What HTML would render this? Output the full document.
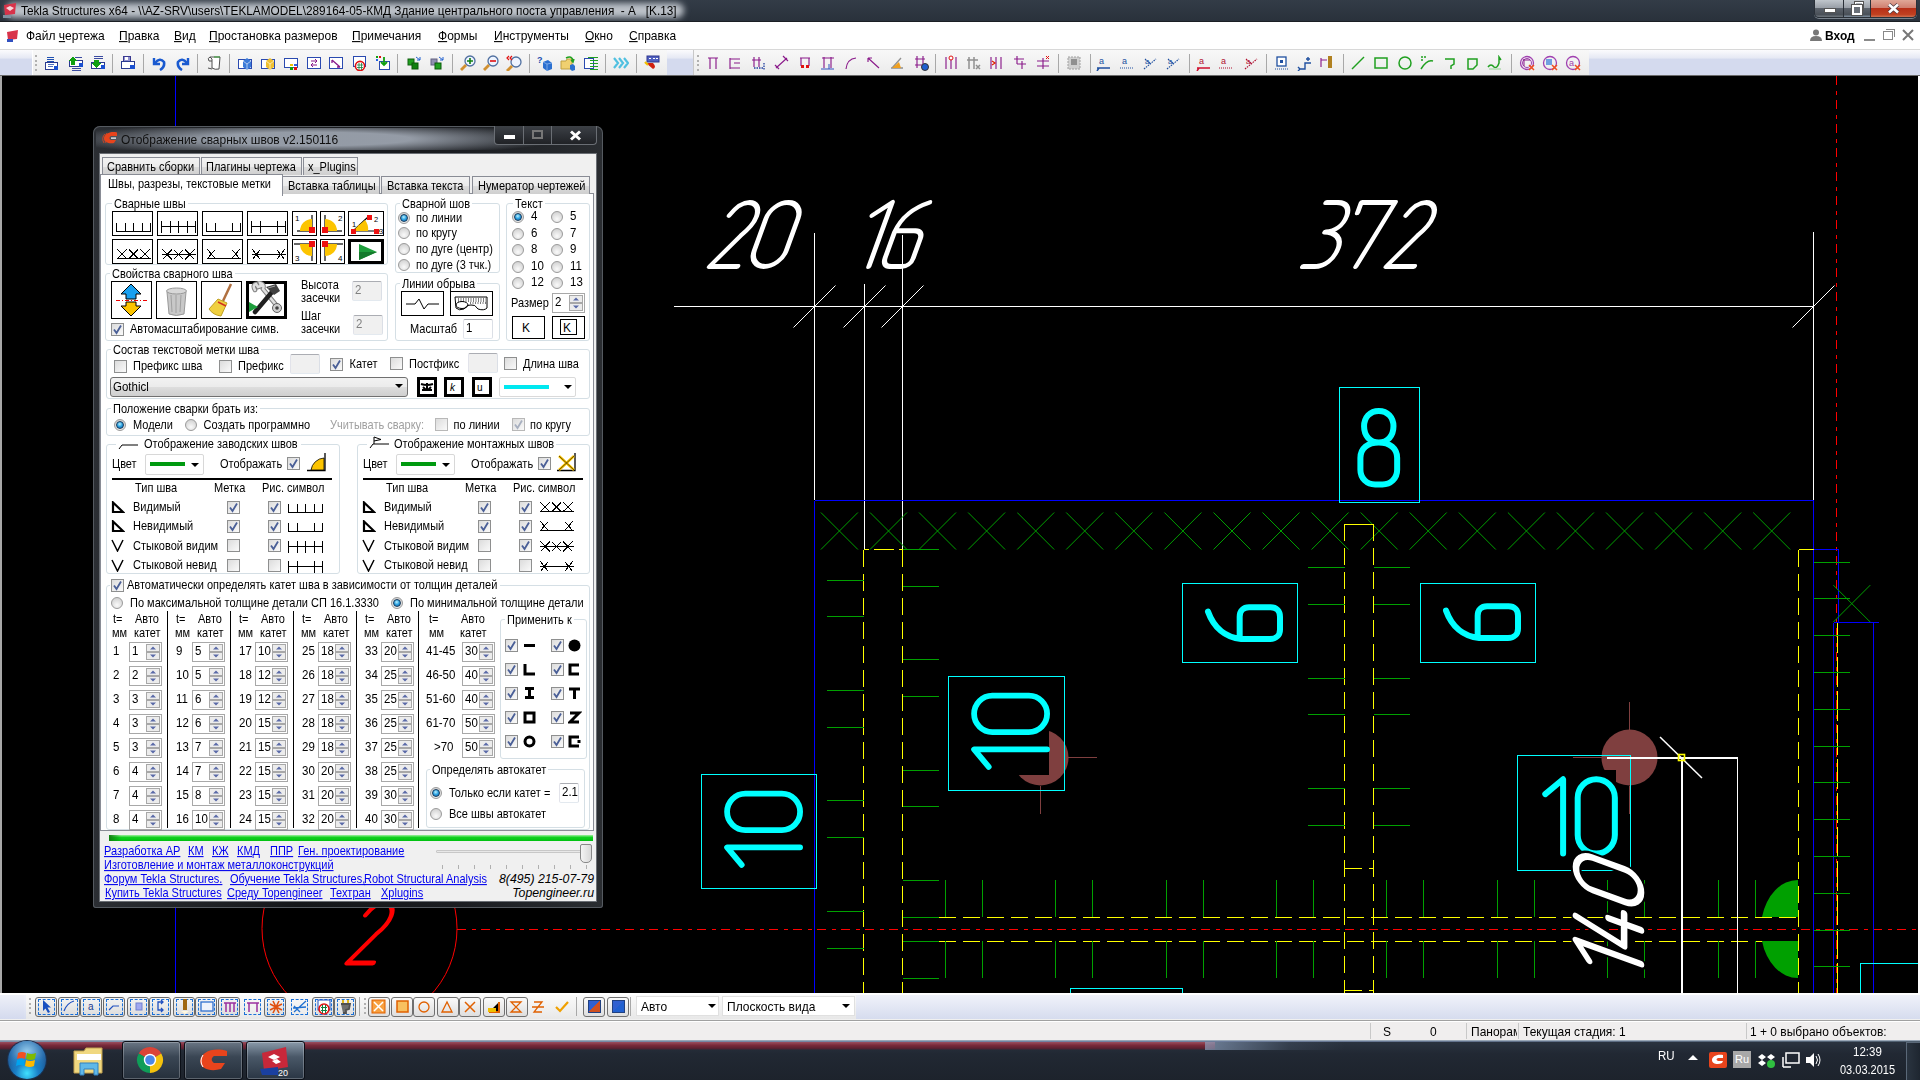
<!DOCTYPE html><html><head><meta charset="utf-8"><style>html,body{margin:0;padding:0}body{width:1920px;height:1080px;overflow:hidden;position:relative;background:#000;font-family:'Liberation Sans', sans-serif}.a{position:absolute;box-sizing:content-box}.t{position:absolute;white-space:nowrap;line-height:1}u{text-decoration:underline}</style></head><body><div class=a style="left:0;top:0;width:1920px;height:21px;background:linear-gradient(#333c47,#29313b)"></div><div class=a style="left:6px;top:3px;width:678px;height:15px;border-radius:8px;background:rgba(200,205,212,.92);filter:blur(3px)"></div><div class=a style="left:0;top:21px;width:1920px;height:1px;background:#1b1f24"></div><svg class=a style="left:2px;top:2px" width="16" height="16"><path d="M2,3 L14,1 L13,12 L3,13 Z" fill="#d8334a"/><path d="M4,6 L8,4 L12,6 L8,9Z" fill="#fff" opacity=".8"/><rect x="1" y="13" width="8" height="3" fill="#8090a0"/></svg><div class=t style="left:21.0px;top:5.5px;font-size:11.8px;color:#000;transform:scaleY(1.08);transform-origin:0 9.99px;">Tekla Structures x64 - \\AZ-SRV\users\TEKLAMODEL\289164-05-КМД Здание центрального поста управления &nbsp;- А &nbsp; [K.13]</div><div class=a style="left:1814px;top:0;width:103px;height:18px;border:1px solid #2a3038;border-top:none;border-radius:0 0 5px 5px;box-sizing:border-box;overflow:hidden;display:flex;box-shadow:0 1px 0 rgba(200,210,220,.5)"><div style="width:28px;height:17px;background:linear-gradient(#c0c6cc,#9aa0a8 45%,#5c636c 50%,#4a5058 85%,#70787f);border-right:1px solid #2a3038;position:relative"><div style="position:absolute;left:9px;top:8px;width:10px;height:3px;background:#fff;border:1px solid #555"></div></div><div style="width:26px;height:17px;background:linear-gradient(#c0c6cc,#9aa0a8 45%,#5c636c 50%,#4a5058 85%,#8090a0);border-right:1px solid #2a3038;position:relative"><div style="position:absolute;left:11px;top:2px;width:6px;height:6px;border:1.5px solid #fff;box-shadow:0 0 0 1px #555"></div><div style="position:absolute;left:8px;top:5px;width:6px;height:6px;border:2px solid #fff;background:#6a7078;box-shadow:0 0 0 1px #555"></div></div><div style="flex:1;height:17px;background:linear-gradient(#e0a898,#d08070 45%,#b83018 50%,#c04020 85%,#d07050);position:relative"><svg style="position:absolute;left:16px;top:3px" width="13" height="11"><path d="M2,1.5 L11,9.5 M11,1.5 L2,9.5" stroke="#4a3a40" stroke-width="4"/><path d="M2,1.5 L11,9.5 M11,1.5 L2,9.5" stroke="#fff" stroke-width="2.6"/></svg></div></div><div class=a style="left:0.0px;top:22.0px;width:1920.0px;height:27.0px;background:#fff"></div><div class=a style="left:0.0px;top:49.0px;width:1920.0px;height:1.0px;background:#d8d8d8"></div><svg class=a style="left:5px;top:29px" width="14" height="14"><path d="M2,3 L13,1 L12,10 L3,11 Z" fill="#d8334a"/><rect x="2" y="10" width="6" height="3" fill="#3050c0"/></svg><div class=t style="left:26.0px;top:29.8px;font-size:12px;color:#000;transform:scaleY(1.08);transform-origin:0 10.16px;">Файл <u>ч</u>ертежа</div><div class=t style="left:119.0px;top:29.8px;font-size:12px;color:#000;transform:scaleY(1.08);transform-origin:0 10.16px;"><u>П</u>равка</div><div class=t style="left:174.0px;top:29.8px;font-size:12px;color:#000;transform:scaleY(1.08);transform-origin:0 10.16px;"><u>В</u>ид</div><div class=t style="left:209.0px;top:29.8px;font-size:12px;color:#000;transform:scaleY(1.08);transform-origin:0 10.16px;"><u>П</u>ростановка размеров</div><div class=t style="left:352.0px;top:29.8px;font-size:12px;color:#000;transform:scaleY(1.08);transform-origin:0 10.16px;"><u>П</u>римечания</div><div class=t style="left:438.0px;top:29.8px;font-size:12px;color:#000;transform:scaleY(1.08);transform-origin:0 10.16px;"><u>Ф</u>ормы</div><div class=t style="left:494.0px;top:29.8px;font-size:12px;color:#000;transform:scaleY(1.08);transform-origin:0 10.16px;"><u>И</u>нструменты</div><div class=t style="left:585.0px;top:29.8px;font-size:12px;color:#000;transform:scaleY(1.08);transform-origin:0 10.16px;"><u>О</u>кно</div><div class=t style="left:629.0px;top:29.8px;font-size:12px;color:#000;transform:scaleY(1.08);transform-origin:0 10.16px;"><u>С</u>правка</div><svg class=a style="left:1809px;top:29px" width="14" height="12"><circle cx="7" cy="3.5" r="3" fill="#777"/><path d="M1,12 Q1,7 7,7 Q13,7 13,12Z" fill="#777"/></svg><div class=t style="left:1825.0px;top:29.8px;font-size:12px;color:#000;transform:scaleY(1.08);transform-origin:0 10.16px;font-weight:bold">Вход</div><div class=a style="left:1864.0px;top:39.0px;width:11.0px;height:2.0px;background:#8a8a8a"></div><div class=a style="left:1883px;top:31px;width:8px;height:7px;border:1px solid #888"></div><div class=a style="left:1886px;top:29px;width:8px;height:7px;border-top:1px solid #888;border-right:1px solid #888"></div><svg class=a style="left:1902px;top:29px" width="12" height="12"><path d="M1,1 L11,11 M11,1 L1,11" stroke="#777" stroke-width="2"/></svg><div class=a style="left:0.0px;top:50.0px;width:1920.0px;height:26.0px;background:linear-gradient(#fbfbfd,#e6e9f4 30%,#d4daee 36%,#d4daee)"></div><div class=a style="left:32.0px;top:50.0px;width:634.0px;height:26.0px;background:linear-gradient(#f8f8f8,#eaeaea);border-left:1px solid #fff"></div><div class=a style="left:693.0px;top:50.0px;width:895.0px;height:26.0px;background:linear-gradient(#f8f8f8,#eaeaea);border-left:1px solid #c8c8c8"></div><div class=a style="left:0.0px;top:75.0px;width:1920.0px;height:1.0px;background:#6a6a6a"></div><div class=a style="left:0.0px;top:993.0px;width:1920.0px;height:28.0px;background:#f0f0f0"></div><div class=a style="left:0.0px;top:993.0px;width:1920.0px;height:2.0px;background:#fff"></div><div class=a style="left:0.0px;top:995.0px;width:24.0px;height:24.0px;background:linear-gradient(#eef0f8,#d4daee)"></div><div class=a style="left:24.0px;top:995.0px;width:1896.0px;height:24.0px;background:linear-gradient(#f0f2fa,#d6dcee)"></div><div class=a style="left:26.0px;top:995.0px;width:830.0px;height:24.0px;background:linear-gradient(#fafafa,#e8e8e8)"></div><div class=a style="left:0.0px;top:1020.0px;width:1920.0px;height:1.0px;background:#a0a0a0"></div><div class=a style="left:0.0px;top:1021.0px;width:1920.0px;height:19.0px;background:#f0eeee;border-top:1px solid #fff"></div><div class=a style="left:1370.0px;top:1023.0px;width:1.0px;height:16.0px;background:#c8c8c8"></div><div class=a style="left:1466.0px;top:1023.0px;width:1.0px;height:16.0px;background:#c8c8c8"></div><div class=a style="left:1518.0px;top:1023.0px;width:1.0px;height:16.0px;background:#c8c8c8"></div><div class=a style="left:1746.0px;top:1023.0px;width:1.0px;height:16.0px;background:#c8c8c8"></div><div class=t style="left:1383.0px;top:1025.8px;font-size:12px;color:#000;transform:scaleY(1.08);transform-origin:0 10.16px;">S</div><div class=t style="left:1430.0px;top:1025.8px;font-size:12px;color:#000;transform:scaleY(1.08);transform-origin:0 10.16px;">0</div><div class=t style="left:1471.0px;top:1025.8px;font-size:12px;color:#000;transform:scaleY(1.08);transform-origin:0 10.16px;width:46px;overflow:hidden">Панорам</div><div class=t style="left:1523.0px;top:1025.8px;font-size:12px;color:#000;transform:scaleY(1.08);transform-origin:0 10.16px;">Текущая стадия: 1</div><div class=t style="left:1750.0px;top:1025.8px;font-size:12px;color:#000;transform:scaleY(1.08);transform-origin:0 10.16px;">1 + 0 выбрано объектов:</div><div class=a style="left:0.0px;top:1040.0px;width:1920.0px;height:40.0px;background:linear-gradient(#2c3542 0%,#212833 35%,#1d232c 100%)"></div><div class=a style="left:0.0px;top:1041.0px;width:1920.0px;height:1.0px;background:linear-gradient(90deg,#8090a8,#7080a0 60%,#506070)"></div><div class=a style="left:0.0px;top:1042.0px;width:1215.0px;height:8.0px;background:linear-gradient(#9a5060,#7a2a3a 40%,#5a2030 80%,rgba(40,40,50,0))"></div><div class=a style="left:1205.0px;top:1042.0px;width:140.0px;height:8.0px;background:linear-gradient(90deg,rgba(140,160,190,.7),rgba(80,95,115,.3) 60%,rgba(0,0,0,0))"></div><div class=a style="left:0.0px;top:1040.0px;width:1920.0px;height:1.0px;background:#9aa8b8"></div><svg class=a style="left:44.0px;top:55px" width="16" height="16"><g shape-rendering="crispEdges"><path d="M2.5,2.5 L9.5,2.5 M2.5,4.5 L9.5,4.5 M2.5,6.5 L9.5,6.5 M2.5,8.5 L9.5,8.5 M2.5,10.5 L7.5,10.5" stroke="#2050b0"/><rect x="1.5" y="7.5" width="12" height="7" fill="#fff" stroke="#2a3a90"/><path d="M3.5,9.5 L9.5,9.5 M3.5,11.5 L8.5,11.5" stroke="#5070c0"/><rect x="10" y="11" width="4" height="4" fill="#1a50d0"/></g></svg><svg class=a style="left:67.5px;top:55px" width="16" height="16"><g shape-rendering="crispEdges"><path d="M3.5,13.5 L12.5,13.5 M3.5,15.5 L12.5,15.5 M6.5,2.5 L13.5,2.5" stroke="#3a4aa0"/><rect x="1.5" y="5.5" width="13" height="6" fill="#fff" stroke="#2a3a90"/><rect x="11" y="8" width="4" height="4" fill="#1a50d0"/><path d="M1,6 L5,1 L9,6 L7,6 L7,10 L3,10 L3,6Z" fill="#10a010"/></g></svg><svg class=a style="left:90.4px;top:55px" width="16" height="16"><g shape-rendering="crispEdges"><path d="M3.5,1.5 L12.5,1.5 M3.5,3.5 L12.5,3.5" stroke="#3a4aa0"/><rect x="1.5" y="7.5" width="13" height="6" fill="#fff" stroke="#2a3a90"/><rect x="11" y="10" width="4" height="4" fill="#1a50d0"/><path d="M2,8 L6.5,13 L11,8 L9,8 L9,5 L4,5 L4,8Z" fill="#10a010"/></g></svg><svg class=a style="left:120.3px;top:55px" width="16" height="16"><g shape-rendering="crispEdges"><rect x="3.5" y="1.5" width="7" height="5" fill="#9090d0" stroke="#3a3a90"/><rect x="5" y="2" width="3" height="3" fill="#fff"/><rect x="1.5" y="6.5" width="13" height="7" fill="#fff" stroke="#2a3a90"/><rect x="10" y="10" width="5" height="4" fill="#1a50d0"/></g></svg><svg class=a style="left:151.3px;top:55px" width="16" height="16"><path d="M3,3 L3,9 L9,9" fill="none" stroke="#1a5ad0" stroke-width="2.4"/><path d="M4,8 Q9,2 13,7 Q14,12 9,15" fill="none" stroke="#1a5ad0" stroke-width="2.6"/></svg><svg class=a style="left:175.4px;top:55px" width="16" height="16"><path d="M13,3 L13,9 L7,9" fill="none" stroke="#1a5ad0" stroke-width="2.4"/><path d="M12,8 Q7,2 3,7 Q2,12 7,15" fill="none" stroke="#1a5ad0" stroke-width="2.6"/></svg><svg class=a style="left:206.0px;top:55px" width="16" height="16"><path d="M4,2 L14,2 L13,14 Q9,15 6,13 L6,4Z" fill="#fff" stroke="#505050"/><path d="M4,2 Q1,3 3,6 L6,6 M2,13 L6,14" stroke="#505050" fill="none"/><path d="M8,2 L14,2" stroke="#30a030"/></svg><svg class=a style="left:237.0px;top:55px" width="16" height="16"><g shape-rendering="crispEdges"><rect x="1.5" y="4.5" width="13" height="9" fill="#fff" stroke="#2a4ab0"/></g><path d="M6,6 L10,3 L14,6 L14,12 L10,15 L6,12Z" fill="#3a7ad8"/><path d="M6,6 L10,9 L14,6 M10,9 L10,15" stroke="#fff" stroke-width=".6" fill="none"/></svg><svg class=a style="left:260.0px;top:55px" width="16" height="16"><g shape-rendering="crispEdges"><rect x="1.5" y="4.5" width="13" height="9" fill="#fff" stroke="#2a4ab0"/></g><path d="M6,6 L10,3 L14,6 L14,12 L10,15 L6,12Z" fill="#f0c030"/><path d="M6,6 L10,9 L14,6 M10,9 L10,15" stroke="#fff" stroke-width=".6" fill="none"/></svg><svg class=a style="left:282.6px;top:55px" width="16" height="16"><g shape-rendering="crispEdges"><rect x="1.5" y="3.5" width="13" height="9" fill="#fff" stroke="#2a4ab0"/><rect x="7" y="9" width="3" height="2" fill="#f0c000"/><rect x="11" y="9" width="3" height="2" fill="#3060e0"/><rect x="7" y="12" width="3" height="3" fill="#10a010"/><rect x="11" y="12" width="3" height="3" fill="#e01010"/></g></svg><svg class=a style="left:305.5px;top:55px" width="16" height="16"><g shape-rendering="crispEdges"><rect x="1.5" y="2.5" width="13" height="11" fill="#fff" stroke="#2a4ab0"/></g><path d="M5,6 L11,6 M9,4 L11,6 L9,8 M11,10 L5,10 M7,8 L5,10 L7,12" stroke="#8a1a8a" fill="none"/></svg><svg class=a style="left:328.1px;top:55px" width="16" height="16"><g shape-rendering="crispEdges"><rect x="1.5" y="2.5" width="13" height="11" fill="#fff" stroke="#2a4ab0"/></g><path d="M4,5 L12,12 M4,5 L4,8 M12,12 L9,12" stroke="#8a1a8a" fill="none" stroke-width="1.3"/></svg><svg class=a style="left:351.8px;top:55px" width="16" height="16"><g shape-rendering="crispEdges"><rect x="1.5" y="1.5" width="12" height="10" fill="#fff" stroke="#2a4ab0"/></g><circle cx="8" cy="11" r="4.6" fill="#fff" stroke="#e01010" stroke-width="1.6"/><path d="M5,10 L11,10 M5,12.5 L11,12.5 M7,8 L7,15 M9.5,8 L9.5,15" stroke="#108040" stroke-width=".8"/></svg><svg class=a style="left:374.8px;top:55px" width="16" height="16"><g shape-rendering="crispEdges"><rect x="4.5" y="6.5" width="10" height="8" fill="#fff" stroke="#2a4ab0"/><rect x="1" y="1" width="2" height="2" fill="#10a010"/><rect x="4" y="1" width="2" height="2" fill="#e01010"/><rect x="1" y="4" width="2" height="2" fill="#2060e0"/></g><path d="M9,2 L9,10 M6,7 L9,10 L12,7" stroke="#10a010" stroke-width="1.8" fill="none"/></svg><svg class=a style="left:405.8px;top:55px" width="16" height="16"><rect x="2" y="4" width="6" height="6" fill="#20a020" stroke="#106010"/><rect x="6" y="8" width="6" height="6" fill="#108010" stroke="#0a5a0a"/><path d="M10,2 L14,5 M14,2 L14,5 L11,5" stroke="#2060d0" fill="none"/></svg><svg class=a style="left:428.8px;top:55px" width="16" height="16"><rect x="2" y="4" width="6" height="6" fill="#9090b0" stroke="#606080"/><rect x="6" y="8" width="6" height="6" fill="#20a020" stroke="#0a5a0a"/><path d="M10,2 L14,5 M14,2 L14,5 L11,5" stroke="#2060d0" fill="none"/></svg><svg class=a style="left:459.7px;top:55px" width="16" height="16"><circle cx="10" cy="6" r="5" fill="#eef4ff" stroke="#5070a0" stroke-width="1.3"/><path d="M7,6 L13,6 M10,3 L10,9" stroke="#108010" stroke-width="1.6"/><path d="M6,10 L1,15" stroke="#d09030" stroke-width="2.8"/></svg><svg class=a style="left:483.0px;top:55px" width="16" height="16"><circle cx="10" cy="6" r="5" fill="#eef4ff" stroke="#5070a0" stroke-width="1.3"/><path d="M7,6 L13,6" stroke="#e01010" stroke-width="1.6"/><path d="M6,10 L1,15" stroke="#d09030" stroke-width="2.8"/></svg><svg class=a style="left:506.0px;top:55px" width="16" height="16"><circle cx="10" cy="7" r="5" fill="#eef4ff" stroke="#5070a0" stroke-width="1.3"/><path d="M3,1 L1,3 L3,5 M6,1 L4,3 L6,5" stroke="#e01010" fill="none" stroke-width="1.2"/><path d="M6,11 L1,16" stroke="#d09030" stroke-width="2.8"/></svg><svg class=a style="left:537.0px;top:55px" width="16" height="16"><text x="0" y="8" font-size="9" font-weight="bold" fill="#2050b0" font-family="Liberation Sans">?</text><path d="M6,7 L11,5 L15,8 L15,14 L10,16 L6,13Z" fill="#2a70d0"/><path d="M6,7 L10,9 L15,8 M10,9 L10,16" stroke="#9ac0f0" stroke-width=".7" fill="none"/></svg><svg class=a style="left:560.0px;top:55px" width="16" height="16"><path d="M1,6 L6,6 L7,4 L12,4 L12,14 L1,14Z" fill="#f0d070" stroke="#c0a040"/><path d="M6,3 Q12,0 13,6 M11,5 L13,7 L14,4" stroke="#20a020" fill="none" stroke-width="1.5"/><path d="M10,10 L13,9 L15,11 L15,15 L12,16 L10,14Z" fill="#2a70d0"/></svg><svg class=a style="left:583.3px;top:55px" width="16" height="16"><g shape-rendering="crispEdges"><rect x="1.5" y="3.5" width="9" height="10" fill="#fff" stroke="#2a4ab0" stroke-width="1.4"/><path d="M5,2.5 L15,2.5 M7,5.5 L15,5.5 M7,8.5 L15,8.5 M7,11.5 L15,11.5 M7,14.5 L15,14.5" stroke="#20a020"/></g></svg><svg class=a style="left:612.9px;top:55px" width="16" height="16"><path d="M1,3 L5,8 L1,13 M6,3 L10,8 L6,13 M11,3 L15,8 L11,13" stroke="#50c0e0" stroke-width="2.2" fill="none"/></svg><svg class=a style="left:643.5px;top:55px" width="16" height="16"><rect x="3" y="1" width="12" height="6" fill="#5060c0" stroke="#303890"/><path d="M5,3.5 L7,3.5 M9,3.5 L11,3.5 M12,3.5 L14,3.5" stroke="#fff"/><path d="M2,8 L9,14 Q13,12 9,8Z" fill="#d02010"/><path d="M1,7 L4,10" stroke="#f0c000" stroke-width="2.2"/></svg><div class=a style="left:112.0px;top:54.0px;width:1.0px;height:19.0px;background:#a8a8a8"></div><div class=a style="left:143.0px;top:54.0px;width:1.0px;height:19.0px;background:#a8a8a8"></div><div class=a style="left:197.0px;top:54.0px;width:1.0px;height:19.0px;background:#a8a8a8"></div><div class=a style="left:228.5px;top:54.0px;width:1.0px;height:19.0px;background:#a8a8a8"></div><div class=a style="left:397.0px;top:54.0px;width:1.0px;height:19.0px;background:#a8a8a8"></div><div class=a style="left:452.0px;top:54.0px;width:1.0px;height:19.0px;background:#a8a8a8"></div><div class=a style="left:528.5px;top:54.0px;width:1.0px;height:19.0px;background:#a8a8a8"></div><div class=a style="left:605.0px;top:54.0px;width:1.0px;height:19.0px;background:#a8a8a8"></div><div class=a style="left:636.0px;top:54.0px;width:1.0px;height:19.0px;background:#a8a8a8"></div><div class=a style="left:35.0px;top:55.0px;width:2.0px;height:2.0px;background:#b0b0b0"></div><div class=a style="left:35.0px;top:59.5px;width:2.0px;height:2.0px;background:#b0b0b0"></div><div class=a style="left:35.0px;top:64.0px;width:2.0px;height:2.0px;background:#b0b0b0"></div><div class=a style="left:35.0px;top:68.5px;width:2.0px;height:2.0px;background:#b0b0b0"></div><div class=a style="left:697.0px;top:55.0px;width:2.0px;height:2.0px;background:#b0b0b0"></div><div class=a style="left:697.0px;top:59.5px;width:2.0px;height:2.0px;background:#b0b0b0"></div><div class=a style="left:697.0px;top:64.0px;width:2.0px;height:2.0px;background:#b0b0b0"></div><div class=a style="left:697.0px;top:68.5px;width:2.0px;height:2.0px;background:#b0b0b0"></div><svg class=a style="left:704.8px;top:55px" width="16" height="16"><path d="M3,3 L13,3 M5,3 L5,14 M11,3 L11,14" stroke="#8a1a8a" stroke-width="1.15" fill="none"/></svg><svg class=a style="left:727.4px;top:55px" width="16" height="16"><path d="M3,3 L3,14 M3,4 L13,4 M3,13 L13,13 M7,8 L13,8" stroke="#8a1a8a" stroke-width="1.15" fill="none"/></svg><svg class=a style="left:751.1px;top:55px" width="16" height="16"><path d="M3,2 L3,12 M8,2 L8,12 M1,5 L10,5" stroke="#8a1a8a" stroke-width="1.15" fill="none"/><path d="M3,13 L13,13 M13,8 L13,15" stroke="#2040a0" stroke-dasharray="1.5,1" fill="none" stroke-width="1.3"/></svg><svg class=a style="left:774.0px;top:55px" width="16" height="16"><path d="M2,13 L13,3 M9,1 L14,6 M1,10 L5,14" stroke="#8a1a8a" stroke-width="1.15" fill="none"/></svg><svg class=a style="left:797.0px;top:55px" width="16" height="16"><path d="M3,3 L13,3 M4,3 L4,11 M12,3 L12,11" stroke="#8a1a8a" stroke-width="1.15" fill="none"/><rect x="4" y="10" width="3" height="3" fill="#e01010"/><rect x="9" y="10" width="3" height="3" fill="#e01010"/></svg><svg class=a style="left:820.3px;top:55px" width="16" height="16"><path d="M2,3 L14,3 M4,2 L4,13 M11,2 L11,13" stroke="#8a1a8a" stroke-width="1.15" fill="none"/><path d="M1,14 L14,14 M9,9 L9,14" stroke="#3050c0" fill="none"/></svg><svg class=a style="left:843.3px;top:55px" width="16" height="16"><path d="M3,14 Q4,4 13,3" stroke="#8a1a8a" stroke-width="1.15" fill="none"/></svg><svg class=a style="left:866.3px;top:55px" width="16" height="16"><path d="M2,3 L13,13 M2,3 L2,7 M2,3 L6,3" stroke="#8a1a8a" stroke-width="1.15" fill="none"/></svg><svg class=a style="left:888.9px;top:55px" width="16" height="16"><path d="M2,13 L14,13 M3,13 L12,3" stroke="#909090" stroke-width="1.3" fill="none"/><path d="M3,13 L10,7 L12,13Z" fill="#f0a020"/></svg><svg class=a style="left:912.6px;top:55px" width="16" height="16"><path d="M2,4 L12,4 M2,10 L9,10 M4,1 L4,13 M10,1 L10,9" stroke="#8a1a8a" stroke-width="1.15" fill="none"/><circle cx="12" cy="12" r="3.5" fill="#2060d0" stroke="#333"/></svg><svg class=a style="left:942.8px;top:55px" width="16" height="16"><path d="M3,2 L3,14 M8,2 L8,14 M13,2 L13,14" stroke="#8a1a8a" stroke-width="1.15"/><circle cx="8" cy="3" r="2" fill="#fff" stroke="#e01010"/></svg><svg class=a style="left:966.2px;top:55px" width="16" height="16"><path d="M3,2 L3,14 M8,2 L8,14 M1,5 L12,5" stroke="#909090" stroke-width="1.5"/><path d="M10,10 L14,14 M14,10 L10,14" stroke="#909090" stroke-width="1.5"/></svg><svg class=a style="left:989.1px;top:55px" width="16" height="16"><path d="M2,2 L2,14 M7,2 L7,14 M12,2 L12,14" stroke="#8a1a8a" stroke-width="1.15"/><path d="M3,6 L6,8 L3,10" stroke="#e02000" fill="none" stroke-width="1.3"/></svg><svg class=a style="left:1012.0px;top:55px" width="16" height="16"><path d="M2,4 L12,4 M5,1 L5,9 M5,9 L14,9 M10,6 L10,14" stroke="#8a1a8a" stroke-width="1.15" fill="none"/></svg><svg class=a style="left:1035.4px;top:55px" width="16" height="16"><path d="M2,6 L14,6 M2,11 L14,11 M8,3 L8,14" stroke="#8a1a8a" stroke-width="1.15" fill="none"/><path d="M11,1 L14,4 M14,1 L11,4" stroke="#e01010"/></svg><svg class=a style="left:1065.7px;top:55px" width="16" height="16"><rect x="2" y="2" width="12" height="12" fill="#d0d0d0" stroke="#a0a0a0" stroke-dasharray="2,1"/><rect x="5" y="4" width="6" height="6" fill="#909090"/></svg><svg class=a style="left:1096.0px;top:55px" width="16" height="16"><text x="3" y="9" font-size="9" fill="#2050a0" font-family="Liberation Sans">a</text><path d="M1,13 L14,13 M3,13 L1,16" stroke="#2050a0" stroke-width="1.5"/></svg><svg class=a style="left:1119.3px;top:55px" width="16" height="16"><text x="3" y="9" font-size="9" fill="#2050a0" font-family="Liberation Sans">a</text><path d="M1,13 L14,13" stroke="#2050a0" stroke-dasharray="1,1"/></svg><svg class=a style="left:1142.2px;top:55px" width="16" height="16"><path d="M3,4 L9,9 M2,14 L14,4" stroke="#2050a0" stroke-width="1.2" stroke-dasharray="1.5,1"/><text x="3" y="9" font-size="8" fill="#2050a0" font-family="Liberation Sans">a</text></svg><svg class=a style="left:1165.2px;top:55px" width="16" height="16"><path d="M3,4 L9,9 M2,14 L14,4" stroke="#2050a0" stroke-width="1.2" stroke-dasharray="1.5,1"/><text x="3" y="9" font-size="8" fill="#2050a0" font-family="Liberation Sans">a</text></svg><svg class=a style="left:1196.2px;top:55px" width="16" height="16"><text x="3" y="9" font-size="9" fill="#b01030" font-family="Liberation Sans">a</text><path d="M1,13 L14,13 M3,13 L1,16" stroke="#d01030" stroke-width="1.5"/></svg><svg class=a style="left:1218.1px;top:55px" width="16" height="16"><text x="3" y="9" font-size="9" fill="#b01030" font-family="Liberation Sans">a</text><path d="M1,13 L14,13" stroke="#b01030" stroke-dasharray="1,1"/></svg><svg class=a style="left:1242.5px;top:55px" width="16" height="16"><path d="M3,4 L9,9 M2,14 L14,4" stroke="#b01030" stroke-width="1.2" stroke-dasharray="1.5,1"/><text x="3" y="9" font-size="8" fill="#b01030" font-family="Liberation Sans">a</text></svg><svg class=a style="left:1273.5px;top:55px" width="16" height="16"><rect x="3" y="2" width="9" height="9" fill="#fff" stroke="#2050a0" stroke-width="1.3"/><rect x="6" y="5" width="3" height="3" fill="#2050a0"/><path d="M1,14 L14,14" stroke="#2050a0" stroke-dasharray="1,1"/></svg><svg class=a style="left:1296.5px;top:55px" width="16" height="16"><path d="M2,14 L8,14 L8,8 L14,8 M11,2 L11,6 M9,4 L13,4 M1,12 L3,14 L1,16" stroke="#2050a0" stroke-width="1.4" fill="none"/></svg><svg class=a style="left:1319.0px;top:55px" width="16" height="16"><path d="M2,3 L2,12 M2,5 L8,5" stroke="#8a1a8a" stroke-width="1.15" fill="none"/><rect x="9" y="1" width="4" height="12" fill="#b08020"/><path d="M7,13 L15,13 L11,16Z" fill="#f0f0f0"/></svg><svg class=a style="left:1350.0px;top:55px" width="16" height="16"><path d="M2,14 L14,2" stroke="#20a020" stroke-width="1.5"/></svg><svg class=a style="left:1373.0px;top:55px" width="16" height="16"><rect x="2" y="3" width="12" height="10" fill="none" stroke="#20a020" stroke-width="1.5"/></svg><svg class=a style="left:1396.5px;top:55px" width="16" height="16"><circle cx="8" cy="8" r="6" fill="none" stroke="#20a020" stroke-width="1.5"/></svg><svg class=a style="left:1419.1px;top:55px" width="16" height="16"><path d="M2,14 Q8,4 14,6" stroke="#20a020" stroke-width="1.5" fill="none"/><path d="M2,2 L4,2 M2,5 L4,5 M5,2 L7,2" stroke="#20a020" stroke-width="1.5"/></svg><svg class=a style="left:1442.1px;top:55px" width="16" height="16"><path d="M3,4 L12,4 L12,9 L9,11 L9,14" stroke="#20a020" stroke-width="1.5" fill="none"/></svg><svg class=a style="left:1465.1px;top:55px" width="16" height="16"><path d="M3,4 L12,4 L12,10 L8,14 L3,14Z" stroke="#20a020" stroke-width="1.5" fill="none"/></svg><svg class=a style="left:1486.8px;top:55px" width="16" height="16"><path d="M1,12 Q4,8 7,12 Q10,14 12,8 L12,2 L14,5" stroke="#20a020" stroke-width="1.5" fill="none"/><path d="M2,14 L14,14" stroke="#c0e0c0" stroke-width="2"/></svg><svg class=a style="left:1519.3px;top:55px" width="16" height="16"><circle cx="8" cy="8" r="6.5" fill="none" stroke="#a040b0" stroke-width="1.3"/><circle cx="8" cy="8" r="4.5" fill="none" stroke="#a040b0"/><path d="M4,5 L11,5 M5,4 L5,11" stroke="#8a1a8a"/><path d="M10,10 L15,15 M15,10 L10,15" stroke="#f05020" stroke-width="1.5"/></svg><svg class=a style="left:1542.3px;top:55px" width="16" height="16"><circle cx="8" cy="8" r="6.5" fill="none" stroke="#a040b0" stroke-width="1.3"/><rect x="4" y="4" width="6" height="6" fill="#70a0e0"/><path d="M10,10 L15,15 M15,10 L10,15" stroke="#f05020" stroke-width="1.5"/></svg><svg class=a style="left:1565.3px;top:55px" width="16" height="16"><circle cx="8" cy="8" r="6.5" fill="none" stroke="#a040b0" stroke-width="1.3"/><text x="4" y="11" font-size="9" fill="#a040b0" font-family="Liberation Sans">a</text><path d="M10,10 L15,15 M15,10 L10,15" stroke="#f05020" stroke-width="1.5"/></svg><div class=a style="left:935.0px;top:54.0px;width:1.0px;height:19.0px;background:#a8a8a8"></div><div class=a style="left:1058.0px;top:54.0px;width:1.0px;height:19.0px;background:#a8a8a8"></div><div class=a style="left:1089.5px;top:54.0px;width:1.0px;height:19.0px;background:#a8a8a8"></div><div class=a style="left:1188.5px;top:54.0px;width:1.0px;height:19.0px;background:#a8a8a8"></div><div class=a style="left:1266.0px;top:54.0px;width:1.0px;height:19.0px;background:#a8a8a8"></div><div class=a style="left:1342.5px;top:54.0px;width:1.0px;height:19.0px;background:#a8a8a8"></div><div class=a style="left:1511.0px;top:54.0px;width:1.0px;height:19.0px;background:#a8a8a8"></div><div class=a style="left:29.0px;top:998.0px;width:2.0px;height:2.0px;background:#b0b0b0"></div><div class=a style="left:29.0px;top:1002.5px;width:2.0px;height:2.0px;background:#b0b0b0"></div><div class=a style="left:29.0px;top:1007.0px;width:2.0px;height:2.0px;background:#b0b0b0"></div><div class=a style="left:29.0px;top:1011.5px;width:2.0px;height:2.0px;background:#b0b0b0"></div><div class=a style="left:35.0px;top:997px;width:20px;height:18px;border:1px solid #6a6a6a;border-radius:3px;background:linear-gradient(#f4f4f4,#dcdcdc)"></div><div class=a style="left:38.0px;top:999px;width:15px;height:14px;border:1px dashed #1a70d8"></div><svg class=a style="left:38.0px;top:998px" width="18" height="17"><path d="M5,2 L5,13 L7.5,10.5 L10,15 L12,14 L9.5,9.5 L13,9.5Z" fill="#1a50c0"/></svg><div class=a style="left:57.5px;top:997px;width:20px;height:18px;border:1px solid #6a6a6a;border-radius:3px;background:linear-gradient(#f4f4f4,#dcdcdc)"></div><div class=a style="left:60.5px;top:999px;width:15px;height:14px;border:1px dashed #1a70d8"></div><svg class=a style="left:60.5px;top:998px" width="18" height="17"><path d="M3,13 Q6,5 13,3" stroke="#2050c0" stroke-width="1.3" fill="none"/></svg><div class=a style="left:80.0px;top:997px;width:20px;height:18px;border:1px solid #6a6a6a;border-radius:3px;background:linear-gradient(#f4f4f4,#dcdcdc)"></div><div class=a style="left:83.0px;top:999px;width:15px;height:14px;border:1px dashed #1a70d8"></div><svg class=a style="left:83.0px;top:998px" width="18" height="17"><text x="5" y="12" font-size="10" fill="#1a3a90" font-family="Liberation Sans">a</text></svg><div class=a style="left:103.0px;top:997px;width:20px;height:18px;border:1px solid #6a6a6a;border-radius:3px;background:linear-gradient(#f4f4f4,#dcdcdc)"></div><div class=a style="left:106.0px;top:999px;width:15px;height:14px;border:1px dashed #1a70d8"></div><svg class=a style="left:106.0px;top:998px" width="18" height="17"><path d="M3,12 L7,8 L13,8" stroke="#2050c0" stroke-width="1.2" fill="none"/></svg><div class=a style="left:126.5px;top:997px;width:20px;height:18px;border:1px solid #6a6a6a;border-radius:3px;background:linear-gradient(#f4f4f4,#dcdcdc)"></div><div class=a style="left:129.5px;top:999px;width:15px;height:14px;border:1px dashed #1a70d8"></div><svg class=a style="left:129.5px;top:998px" width="18" height="17"><rect x="6" y="5" width="6" height="7" fill="#a0a8f0" stroke="#7080d0"/></svg><div class=a style="left:149.0px;top:997px;width:20px;height:18px;border:1px solid #6a6a6a;border-radius:3px;background:linear-gradient(#f4f4f4,#dcdcdc)"></div><div class=a style="left:152.0px;top:999px;width:15px;height:14px;border:1px dashed #1a70d8"></div><svg class=a style="left:152.0px;top:998px" width="18" height="17"><path d="M11,4 L6,4 L6,12 L11,12 M9,2 L11,4 L9,6 M9,10 L11,12 L9,14" stroke="#2050c0" stroke-width="1.3" fill="none"/></svg><div class=a style="left:172.5px;top:997px;width:20px;height:18px;border:1px solid #6a6a6a;border-radius:3px;background:linear-gradient(#f4f4f4,#dcdcdc)"></div><div class=a style="left:175.5px;top:999px;width:15px;height:14px;border:1px dashed #1a70d8"></div><svg class=a style="left:175.5px;top:998px" width="18" height="17"><rect x="7" y="1" width="4" height="11" fill="#a06810"/><path d="M5,13 L13,13 L9,16Z" fill="#fff8e0"/></svg><div class=a style="left:195.0px;top:997px;width:20px;height:18px;border:1px solid #6a6a6a;border-radius:3px;background:linear-gradient(#f4f4f4,#dcdcdc)"></div><div class=a style="left:198.0px;top:999px;width:15px;height:14px;border:1px dashed #1a70d8"></div><svg class=a style="left:198.0px;top:998px" width="18" height="17"><rect x="3" y="4" width="12" height="9" fill="#eef2fb" stroke="#3070d0" stroke-width="1.3"/></svg><div class=a style="left:218.0px;top:997px;width:20px;height:18px;border:1px solid #6a6a6a;border-radius:3px;background:linear-gradient(#f4f4f4,#dcdcdc)"></div><div class=a style="left:221.0px;top:999px;width:15px;height:14px;border:1px dashed #1a70d8"></div><svg class=a style="left:221.0px;top:998px" width="18" height="17"><path d="M3,5 L15,5 M5,5 L5,14 M9,5 L9,14 M13,5 L13,14" stroke="#9a30a0" stroke-width="1.5" fill="none"/></svg><div class=a style="left:243.5px;top:999px;width:15px;height:14px;border:1px dashed #1a70d8"></div><svg class=a style="left:243.5px;top:998px" width="18" height="17"><path d="M3,5 L15,5 M5,5 L5,14 M13,5 L13,14" stroke="#9a30a0" stroke-width="1.5" fill="none"/></svg><div class=a style="left:264.0px;top:997px;width:20px;height:18px;border:1px solid #6a6a6a;border-radius:3px;background:linear-gradient(#f4f4f4,#dcdcdc)"></div><div class=a style="left:267.0px;top:999px;width:15px;height:14px;border:1px dashed #1a70d8"></div><svg class=a style="left:267.0px;top:998px" width="18" height="17"><path d="M3,6 L15,12 M3,12 L15,6 M6,3 L12,15 M12,3 L6,15" stroke="#e05010" stroke-width="1.6" fill="none"/></svg><div class=a style="left:290.5px;top:999px;width:15px;height:14px;border:1px dashed #1a70d8"></div><svg class=a style="left:290.5px;top:998px" width="18" height="17"><path d="M3,14 L15,3 M3,8 L9,14 M2,10 L15,9" stroke="#2070d0" stroke-width="1.3" fill="none"/></svg><div class=a style="left:311.5px;top:997px;width:20px;height:18px;border:1px solid #6a6a6a;border-radius:3px;background:linear-gradient(#f4f4f4,#dcdcdc)"></div><div class=a style="left:314.5px;top:999px;width:15px;height:14px;border:1px dashed #1a70d8"></div><svg class=a style="left:314.5px;top:998px" width="18" height="17"><rect x="3" y="2" width="12" height="10" fill="#fff" stroke="#2050c0"/><circle cx="9" cy="11" r="5" fill="#fff" stroke="#e01010" stroke-width="1.6"/><path d="M6,9.5 L12,9.5 M6,12.5 L12,12.5 M7.5,7 L7.5,15 M10.5,7 L10.5,15" stroke="#108040"/></svg><div class=a style="left:334.0px;top:997px;width:20px;height:18px;border:1px solid #6a6a6a;border-radius:3px;background:linear-gradient(#f4f4f4,#dcdcdc)"></div><div class=a style="left:337.0px;top:999px;width:15px;height:14px;border:1px dashed #1a70d8"></div><svg class=a style="left:337.0px;top:998px" width="18" height="17"><path d="M6,2 L6,6 M11,2 L11,6" stroke="#e0b000" stroke-width="1.8"/><path d="M4,6 L13,6 L12,11 L9,12 L9,15 L6,15" stroke="#505050" stroke-width="1.8" fill="#707070"/></svg><div class=a style="left:359.0px;top:997.0px;width:1.0px;height:19.0px;background:#a8a8a8"></div><div class=a style="left:364.0px;top:998.0px;width:2.0px;height:2.0px;background:#b0b0b0"></div><div class=a style="left:364.0px;top:1002.5px;width:2.0px;height:2.0px;background:#b0b0b0"></div><div class=a style="left:364.0px;top:1007.0px;width:2.0px;height:2.0px;background:#b0b0b0"></div><div class=a style="left:364.0px;top:1011.5px;width:2.0px;height:2.0px;background:#b0b0b0"></div><div class=a style="left:368.0px;top:997px;width:20px;height:18px;border:1px solid #707070;border-radius:3px;background:linear-gradient(#fafafa,#dedede)"></div><div class=a style="left:390.5px;top:997px;width:20px;height:18px;border:1px solid #707070;border-radius:3px;background:linear-gradient(#fafafa,#dedede)"></div><div class=a style="left:413.0px;top:997px;width:20px;height:18px;border:1px solid #707070;border-radius:3px;background:linear-gradient(#fafafa,#dedede)"></div><div class=a style="left:436.5px;top:997px;width:20px;height:18px;border:1px solid #707070;border-radius:3px;background:linear-gradient(#fafafa,#dedede)"></div><div class=a style="left:459.0px;top:997px;width:20px;height:18px;border:1px solid #707070;border-radius:3px;background:linear-gradient(#fafafa,#dedede)"></div><div class=a style="left:483.0px;top:997px;width:20px;height:18px;border:1px solid #707070;border-radius:3px;background:linear-gradient(#fafafa,#dedede)"></div><div class=a style="left:505.5px;top:997px;width:20px;height:18px;border:1px solid #707070;border-radius:3px;background:linear-gradient(#fafafa,#dedede)"></div><svg class=a style="left:371px;top:999px" width="160" height="16"><rect x="1" y="1" width="13" height="13" fill="#f8a040" stroke="#e06000"/><path d="M3,3 L12,12 M12,3 L3,12" stroke="#fff" stroke-width="1.5"/><rect x="26" y="2" width="11" height="11" fill="#f8c060" stroke="#e06000" stroke-width="1.5"/><circle cx="53" cy="8" r="5" fill="none" stroke="#e06000" stroke-width="1.3"/><path d="M71,13 L76,3 L81,13Z" fill="none" stroke="#e06000" stroke-width="1.3"/><path d="M94,3 L104,13 M104,3 L94,13" stroke="#e06000" stroke-width="1.5"/><path d="M118,13 L128,13 L128,3 M121,10 L125,10" stroke="#e06000" stroke-width="2"/><rect x="117" y="9" width="8" height="4" fill="#f0c000"/><path d="M140,3 L150,3 L140,13 L150,13Z" fill="none" stroke="#e06000" stroke-width="1.3"/></svg><svg class=a style="left:531px;top:999px" width="40" height="16"><path d="M3,3 L11,3 L3,13 L11,13 M1,8 L13,8" stroke="#e06000" stroke-width="1.3" fill="none"/><path d="M25,8 L29,12 L37,3" stroke="#f0a000" stroke-width="2.2" fill="none"/></svg><div class=a style="left:576.0px;top:997.0px;width:1.0px;height:19.0px;background:#a8a8a8"></div><div class=a style="left:582.5px;top:997px;width:20px;height:18px;border:1px solid #707070;border-radius:3px;background:linear-gradient(#fafafa,#dedede)"></div><div class=a style="left:587.5px;top:1000px;width:11px;height:11px;background:linear-gradient(135deg,#3060d0 50%,#d05020 50%);border:1px solid #204080"></div><div class=a style="left:606.5px;top:997px;width:20px;height:18px;border:1px solid #707070;border-radius:3px;background:linear-gradient(#fafafa,#dedede)"></div><div class=a style="left:611.5px;top:1000px;width:11px;height:11px;background:linear-gradient(135deg,#3060d0 50%,#2060d0 50%);border:1px solid #204080"></div><div class=a style="left:630.0px;top:997.0px;width:1.0px;height:19.0px;background:#a8a8a8"></div><div class=a style="left:636px;top:996px;width:83px;height:20px;background:#fff;border:1px solid #e0e0e0;box-sizing:border-box"></div><div class=t style="left:641.0px;top:1000.8px;font-size:12px;color:#000;transform:scaleY(1.08);transform-origin:0 10.16px;">Авто</div><svg class=a style="left:708px;top:1004px" width="9" height="5"><path d="M0,0 L8,0 L4,4Z" fill="#000"/></svg><div class=a style="left:722px;top:996px;width:133px;height:20px;background:#fff;border:1px solid #e0e0e0;box-sizing:border-box"></div><div class=t style="left:727.0px;top:1000.8px;font-size:12px;color:#000;transform:scaleY(1.08);transform-origin:0 10.16px;">Плоскость вида</div><svg class=a style="left:842px;top:1004px" width="9" height="5"><path d="M0,0 L8,0 L4,4Z" fill="#000"/></svg><svg class=a style="left:0;top:0" width="1920" height="1080" viewBox="0 0 1920 1080"><defs><clipPath id="cc"><rect x="2" y="76" width="1916" height="917"/></clipPath></defs><rect x="0" y="76" width="1920" height="917" fill="#000"/><rect x="0" y="76" width="2" height="917" fill="#a8a8a8"/><rect x="1918" y="76" width="2" height="917" fill="#fff"/><g clip-path="url(#cc)" shape-rendering="crispEdges"><line x1="175.5" y1="76" x2="175.5" y2="993" stroke="#0000ff" stroke-width="1" /><line x1="1836.5" y1="76" x2="1836.5" y2="993" stroke="#ff0000" stroke-width="1" stroke-dasharray="9,6,3.5,5.5"/><line x1="457" y1="929.5" x2="1920" y2="929.5" stroke="#ff0000" stroke-width="1" stroke-dasharray="9,6,3.5,5.5"/><circle cx="359.5" cy="928.5" r="97.5" fill="none" stroke="#ff0000" stroke-width="1" shape-rendering="auto"/><line x1="674" y1="306.5" x2="1813.5" y2="306.5" stroke="#ffffff" stroke-width="1" /><line x1="814.5" y1="233" x2="814.5" y2="500" stroke="#ffffff" stroke-width="1" /><line x1="864.5" y1="284" x2="864.5" y2="549" stroke="#ffffff" stroke-width="1" /><line x1="902.5" y1="235" x2="902.5" y2="549" stroke="#ffffff" stroke-width="1" /><line x1="1813.5" y1="232" x2="1813.5" y2="500" stroke="#ffffff" stroke-width="1" /><line x1="793.5" y1="327.5" x2="835.5" y2="285.5" stroke="#ffffff" stroke-width="1" shape-rendering="auto"/><line x1="843.5" y1="327.5" x2="885.5" y2="285.5" stroke="#ffffff" stroke-width="1" shape-rendering="auto"/><line x1="881.5" y1="327.5" x2="923.5" y2="285.5" stroke="#ffffff" stroke-width="1" shape-rendering="auto"/><line x1="1792.5" y1="327.5" x2="1834.5" y2="285.5" stroke="#ffffff" stroke-width="1" shape-rendering="auto"/><line x1="814.5" y1="500.5" x2="1813.5" y2="500.5" stroke="#0000ff" stroke-width="1" /><line x1="814.5" y1="500.5" x2="814.5" y2="993" stroke="#0000ff" stroke-width="1" /><line x1="1813.5" y1="500.5" x2="1813.5" y2="993" stroke="#0000ff" stroke-width="1" /><path d="M820.9,512.5 L857.9,549.5 M820.9,549.5 L857.9,512.5" stroke="#00a000" stroke-width="1" fill="none" shape-rendering="auto"/><path d="M870.0,512.5 L907.0,549.5 M870.0,549.5 L907.0,512.5" stroke="#00a000" stroke-width="1" fill="none" shape-rendering="auto"/><path d="M919.0,512.5 L956.0,549.5 M919.0,549.5 L956.0,512.5" stroke="#00a000" stroke-width="1" fill="none" shape-rendering="auto"/><path d="M968.1,512.5 L1005.1,549.5 M968.1,549.5 L1005.1,512.5" stroke="#00a000" stroke-width="1" fill="none" shape-rendering="auto"/><path d="M1017.2,512.5 L1054.2,549.5 M1017.2,549.5 L1054.2,512.5" stroke="#00a000" stroke-width="1" fill="none" shape-rendering="auto"/><path d="M1066.2,512.5 L1103.2,549.5 M1066.2,549.5 L1103.2,512.5" stroke="#00a000" stroke-width="1" fill="none" shape-rendering="auto"/><path d="M1115.3,512.5 L1152.3,549.5 M1115.3,549.5 L1152.3,512.5" stroke="#00a000" stroke-width="1" fill="none" shape-rendering="auto"/><path d="M1164.4,512.5 L1201.4,549.5 M1164.4,549.5 L1201.4,512.5" stroke="#00a000" stroke-width="1" fill="none" shape-rendering="auto"/><path d="M1213.5,512.5 L1250.5,549.5 M1213.5,549.5 L1250.5,512.5" stroke="#00a000" stroke-width="1" fill="none" shape-rendering="auto"/><path d="M1262.5,512.5 L1299.5,549.5 M1262.5,549.5 L1299.5,512.5" stroke="#00a000" stroke-width="1" fill="none" shape-rendering="auto"/><path d="M1311.6,512.5 L1348.6,549.5 M1311.6,549.5 L1348.6,512.5" stroke="#00a000" stroke-width="1" fill="none" shape-rendering="auto"/><path d="M1360.7,512.5 L1397.7,549.5 M1360.7,549.5 L1397.7,512.5" stroke="#00a000" stroke-width="1" fill="none" shape-rendering="auto"/><path d="M1409.7,512.5 L1446.7,549.5 M1409.7,549.5 L1446.7,512.5" stroke="#00a000" stroke-width="1" fill="none" shape-rendering="auto"/><path d="M1458.8,512.5 L1495.8,549.5 M1458.8,549.5 L1495.8,512.5" stroke="#00a000" stroke-width="1" fill="none" shape-rendering="auto"/><path d="M1507.9,512.5 L1544.9,549.5 M1507.9,549.5 L1544.9,512.5" stroke="#00a000" stroke-width="1" fill="none" shape-rendering="auto"/><path d="M1556.9,512.5 L1593.9,549.5 M1556.9,549.5 L1593.9,512.5" stroke="#00a000" stroke-width="1" fill="none" shape-rendering="auto"/><path d="M1606.0,512.5 L1643.0,549.5 M1606.0,549.5 L1643.0,512.5" stroke="#00a000" stroke-width="1" fill="none" shape-rendering="auto"/><path d="M1655.1,512.5 L1692.1,549.5 M1655.1,549.5 L1692.1,512.5" stroke="#00a000" stroke-width="1" fill="none" shape-rendering="auto"/><path d="M1704.2,512.5 L1741.2,549.5 M1704.2,549.5 L1741.2,512.5" stroke="#00a000" stroke-width="1" fill="none" shape-rendering="auto"/><path d="M1753.2,512.5 L1790.2,549.5 M1753.2,549.5 L1790.2,512.5" stroke="#00a000" stroke-width="1" fill="none" shape-rendering="auto"/><line x1="902" y1="549.5" x2="939" y2="549.5" stroke="#00a000" stroke-width="1" /><line x1="863.5" y1="549.5" x2="902.5" y2="549.5" stroke="#ffff00" stroke-width="1" stroke-dasharray="5,5,20,5"/><line x1="863.5" y1="549.5" x2="863.5" y2="993" stroke="#ffff00" stroke-width="1" stroke-dasharray="17,7"/><line x1="902.5" y1="549.5" x2="902.5" y2="993" stroke="#ffff00" stroke-width="1" stroke-dasharray="17,7"/><line x1="827" y1="580.5" x2="863.5" y2="580.5" stroke="#00a000" stroke-width="1" /><line x1="827" y1="616.5" x2="863.5" y2="616.5" stroke="#00a000" stroke-width="1" /><line x1="827" y1="690.5" x2="863.5" y2="690.5" stroke="#00a000" stroke-width="1" /><line x1="827" y1="727.5" x2="863.5" y2="727.5" stroke="#00a000" stroke-width="1" /><line x1="827" y1="800.5" x2="863.5" y2="800.5" stroke="#00a000" stroke-width="1" /><line x1="827" y1="837.5" x2="863.5" y2="837.5" stroke="#00a000" stroke-width="1" /><line x1="827" y1="911.5" x2="863.5" y2="911.5" stroke="#00a000" stroke-width="1" /><line x1="827" y1="948.5" x2="863.5" y2="948.5" stroke="#00a000" stroke-width="1" /><line x1="902.5" y1="586.5" x2="939" y2="586.5" stroke="#00a000" stroke-width="1" /><line x1="902.5" y1="659.5" x2="939" y2="659.5" stroke="#00a000" stroke-width="1" /><line x1="902.5" y1="696.5" x2="939" y2="696.5" stroke="#00a000" stroke-width="1" /><line x1="902.5" y1="770.5" x2="939" y2="770.5" stroke="#00a000" stroke-width="1" /><line x1="902.5" y1="806.5" x2="939" y2="806.5" stroke="#00a000" stroke-width="1" /><line x1="902.5" y1="880.5" x2="939" y2="880.5" stroke="#00a000" stroke-width="1" /><line x1="902.5" y1="917.5" x2="939" y2="917.5" stroke="#00a000" stroke-width="1" /><line x1="902.5" y1="941.5" x2="939" y2="941.5" stroke="#00a000" stroke-width="1" /><line x1="902.5" y1="978.5" x2="939" y2="978.5" stroke="#00a000" stroke-width="1" /><line x1="1344.5" y1="524" x2="1373.5" y2="524" stroke="#ffff00" stroke-width="1" /><line x1="1344.5" y1="524" x2="1344.5" y2="993" stroke="#ffff00" stroke-width="1" stroke-dasharray="17,7"/><line x1="1373.5" y1="524" x2="1373.5" y2="993" stroke="#ffff00" stroke-width="1" stroke-dasharray="17,7"/><line x1="1344.5" y1="868.5" x2="1373.5" y2="868.5" stroke="#ffff00" stroke-width="1" stroke-dasharray="17,7"/><line x1="1344.5" y1="990.5" x2="1373.5" y2="990.5" stroke="#ffff00" stroke-width="1" stroke-dasharray="17,7"/><line x1="1308" y1="567.5" x2="1344.5" y2="567.5" stroke="#00a000" stroke-width="1" /><line x1="1373.5" y1="567.5" x2="1410" y2="567.5" stroke="#00a000" stroke-width="1" /><line x1="1308" y1="604.5" x2="1344.5" y2="604.5" stroke="#00a000" stroke-width="1" /><line x1="1373.5" y1="604.5" x2="1410" y2="604.5" stroke="#00a000" stroke-width="1" /><line x1="1308" y1="678.5" x2="1344.5" y2="678.5" stroke="#00a000" stroke-width="1" /><line x1="1373.5" y1="678.5" x2="1410" y2="678.5" stroke="#00a000" stroke-width="1" /><line x1="1308" y1="714.5" x2="1344.5" y2="714.5" stroke="#00a000" stroke-width="1" /><line x1="1373.5" y1="714.5" x2="1410" y2="714.5" stroke="#00a000" stroke-width="1" /><line x1="1308" y1="788.5" x2="1344.5" y2="788.5" stroke="#00a000" stroke-width="1" /><line x1="1373.5" y1="788.5" x2="1410" y2="788.5" stroke="#00a000" stroke-width="1" /><line x1="1308" y1="825.5" x2="1344.5" y2="825.5" stroke="#00a000" stroke-width="1" /><line x1="1373.5" y1="825.5" x2="1410" y2="825.5" stroke="#00a000" stroke-width="1" /><line x1="939" y1="917.5" x2="1798.5" y2="917.5" stroke="#ffff00" stroke-width="1" stroke-dasharray="17,7"/><line x1="939" y1="941.5" x2="1798.5" y2="941.5" stroke="#ffff00" stroke-width="1" stroke-dasharray="17,7"/><line x1="945.5" y1="880" x2="945.5" y2="917" stroke="#00a000" stroke-width="1" /><line x1="945.5" y1="941" x2="945.5" y2="978" stroke="#00a000" stroke-width="1" /><line x1="982.5" y1="880" x2="982.5" y2="917" stroke="#00a000" stroke-width="1" /><line x1="982.5" y1="941" x2="982.5" y2="978" stroke="#00a000" stroke-width="1" /><line x1="1055.5" y1="880" x2="1055.5" y2="917" stroke="#00a000" stroke-width="1" /><line x1="1055.5" y1="941" x2="1055.5" y2="978" stroke="#00a000" stroke-width="1" /><line x1="1092.5" y1="880" x2="1092.5" y2="917" stroke="#00a000" stroke-width="1" /><line x1="1092.5" y1="941" x2="1092.5" y2="978" stroke="#00a000" stroke-width="1" /><line x1="1166.5" y1="880" x2="1166.5" y2="917" stroke="#00a000" stroke-width="1" /><line x1="1166.5" y1="941" x2="1166.5" y2="978" stroke="#00a000" stroke-width="1" /><line x1="1203.5" y1="880" x2="1203.5" y2="917" stroke="#00a000" stroke-width="1" /><line x1="1203.5" y1="941" x2="1203.5" y2="978" stroke="#00a000" stroke-width="1" /><line x1="1276.5" y1="880" x2="1276.5" y2="917" stroke="#00a000" stroke-width="1" /><line x1="1276.5" y1="941" x2="1276.5" y2="978" stroke="#00a000" stroke-width="1" /><line x1="1313.5" y1="880" x2="1313.5" y2="917" stroke="#00a000" stroke-width="1" /><line x1="1313.5" y1="941" x2="1313.5" y2="978" stroke="#00a000" stroke-width="1" /><line x1="1386.5" y1="880" x2="1386.5" y2="917" stroke="#00a000" stroke-width="1" /><line x1="1386.5" y1="941" x2="1386.5" y2="978" stroke="#00a000" stroke-width="1" /><line x1="1423.5" y1="880" x2="1423.5" y2="917" stroke="#00a000" stroke-width="1" /><line x1="1423.5" y1="941" x2="1423.5" y2="978" stroke="#00a000" stroke-width="1" /><line x1="1497.5" y1="880" x2="1497.5" y2="917" stroke="#00a000" stroke-width="1" /><line x1="1497.5" y1="941" x2="1497.5" y2="978" stroke="#00a000" stroke-width="1" /><line x1="1534.5" y1="880" x2="1534.5" y2="917" stroke="#00a000" stroke-width="1" /><line x1="1534.5" y1="941" x2="1534.5" y2="978" stroke="#00a000" stroke-width="1" /><line x1="1607.5" y1="880" x2="1607.5" y2="917" stroke="#00a000" stroke-width="1" /><line x1="1607.5" y1="941" x2="1607.5" y2="978" stroke="#00a000" stroke-width="1" /><line x1="1644.5" y1="880" x2="1644.5" y2="917" stroke="#00a000" stroke-width="1" /><line x1="1644.5" y1="941" x2="1644.5" y2="978" stroke="#00a000" stroke-width="1" /><line x1="1718.5" y1="880" x2="1718.5" y2="917" stroke="#00a000" stroke-width="1" /><line x1="1718.5" y1="941" x2="1718.5" y2="978" stroke="#00a000" stroke-width="1" /><line x1="1755.5" y1="880" x2="1755.5" y2="917" stroke="#00a000" stroke-width="1" /><line x1="1755.5" y1="941" x2="1755.5" y2="978" stroke="#00a000" stroke-width="1" /><line x1="1798.5" y1="549.5" x2="1813.5" y2="549.5" stroke="#ffff00" stroke-width="1" /><line x1="1798.5" y1="549.5" x2="1798.5" y2="993" stroke="#ffff00" stroke-width="1" stroke-dasharray="17,7"/><line x1="1813.5" y1="549.5" x2="1838.5" y2="549.5" stroke="#0000ff" stroke-width="1" /><line x1="1838.5" y1="549.5" x2="1838.5" y2="622.5" stroke="#0000ff" stroke-width="1" /><line x1="1833.5" y1="622.5" x2="1879" y2="622.5" stroke="#0000ff" stroke-width="1" /><line x1="1833.5" y1="622.5" x2="1833.5" y2="993" stroke="#0000ff" stroke-width="1" /><line x1="1873.5" y1="622.5" x2="1873.5" y2="993" stroke="#0000ff" stroke-width="1" /><line x1="1837.5" y1="622.5" x2="1837.5" y2="993" stroke="#ffff00" stroke-width="1" stroke-dasharray="30,4"/><line x1="1813.5" y1="562.5" x2="1850" y2="562.5" stroke="#00a000" stroke-width="1" /><line x1="1813.5" y1="598.5" x2="1850" y2="598.5" stroke="#00a000" stroke-width="1" /><line x1="1813.5" y1="635.5" x2="1850" y2="635.5" stroke="#00a000" stroke-width="1" /><line x1="1813.5" y1="672.5" x2="1850" y2="672.5" stroke="#00a000" stroke-width="1" /><line x1="1813.5" y1="709.5" x2="1850" y2="709.5" stroke="#00a000" stroke-width="1" /><line x1="1813.5" y1="746.5" x2="1850" y2="746.5" stroke="#00a000" stroke-width="1" /><line x1="1813.5" y1="782.5" x2="1850" y2="782.5" stroke="#00a000" stroke-width="1" /><line x1="1813.5" y1="819.5" x2="1850" y2="819.5" stroke="#00a000" stroke-width="1" /><line x1="1813.5" y1="856.5" x2="1850" y2="856.5" stroke="#00a000" stroke-width="1" /><line x1="1813.5" y1="893.5" x2="1850" y2="893.5" stroke="#00a000" stroke-width="1" /><line x1="1813.5" y1="930.5" x2="1850" y2="930.5" stroke="#00a000" stroke-width="1" /><line x1="1813.5" y1="966.5" x2="1850" y2="966.5" stroke="#00a000" stroke-width="1" /><path d="M1833.3,585.1 L1870.3,622.1 M1833.3,622.1 L1870.3,585.1" stroke="#00a000" fill="none" shape-rendering="auto"/><path d="M1798,880 A37,49 0 0 0 1762,917 L1798,917 Z M1798,978 A37,49 0 0 1 1762,941 L1798,941 Z" fill="#00a000" shape-rendering="auto"/><rect x="1860.5" y="963.5" width="80" height="40" fill="none" stroke="#00ffff"/><rect x="1070.5" y="988.5" width="112" height="30" fill="none" stroke="#00ffff"/><circle cx="1040.5" cy="757.5" r="28" fill="#7f3f3f" shape-rendering="auto"/><circle cx="1629.5" cy="757.5" r="28" fill="#7f3f3f" shape-rendering="auto"/><line x1="1064" y1="757.5" x2="1097" y2="757.5" stroke="#7f3f3f" stroke-width="1" /><line x1="1040.5" y1="786" x2="1040.5" y2="814" stroke="#7f3f3f" stroke-width="1" /><line x1="1629.5" y1="702" x2="1629.5" y2="730" stroke="#7f3f3f" stroke-width="1" /><line x1="1573" y1="757.5" x2="1602" y2="757.5" stroke="#7f3f3f" stroke-width="1" /><line x1="1629.5" y1="786" x2="1629.5" y2="814" stroke="#7f3f3f" stroke-width="1" /><rect x="971" y="695" width="78" height="80" fill="#000"/><rect x="1537" y="770" width="79" height="86" fill="#000"/><rect x="1339.5" y="387.5" width="80" height="115" fill="none" stroke="#00ffff" stroke-width="1"/><rect x="1182.5" y="583.5" width="115" height="79" fill="none" stroke="#00ffff" stroke-width="1"/><rect x="1420.5" y="583.5" width="115" height="79" fill="none" stroke="#00ffff" stroke-width="1"/><rect x="948.5" y="676.5" width="116" height="114" fill="none" stroke="#00ffff" stroke-width="1"/><rect x="701.5" y="774.5" width="115" height="114" fill="none" stroke="#00ffff" stroke-width="1"/><rect x="1517.5" y="755.5" width="113" height="115" fill="none" stroke="#00ffff" stroke-width="1"/></g><g shape-rendering="crispEdges"><line x1="1607" y1="757.5" x2="1737.5" y2="757.5" stroke="#ffffff" stroke-width="2" /><line x1="1681.5" y1="757" x2="1681.5" y2="993" stroke="#ffffff" stroke-width="2" /><line x1="1737.5" y1="757" x2="1737.5" y2="993" stroke="#ffffff" stroke-width="1.5" /></g><line x1="1660" y1="737" x2="1702" y2="778" stroke="#ffffff" stroke-width="1.5"/><rect x="1678.5" y="754.5" width="6" height="6" fill="none" stroke="#ffff00" stroke-width="1.6"/><g fill="none" stroke="#ffffff" stroke-width="7.81" stroke-linecap="round" stroke-linejoin="round"><path d="M2,20 C8,6 16,0 25,0 C37,0 45,9 45,22 C45,34 39,43 31,52 L0,100 L44,100" transform="translate(709.50,266.50) skewX(-20) scale(0.6400) translate(0,-100)"/><path d="M0,25 A25,25 0 0 1 50,25 L50,75 A25,25 0 0 1 0,75 Z" transform="translate(748.50,266.50) skewX(-20) scale(0.6400) translate(0,-100)"/></g><g fill="none" stroke="#ffffff" stroke-width="7.81" stroke-linecap="round" stroke-linejoin="round"><path d="M4,20 L28,0 L28,100" transform="translate(851.00,266.50) skewX(-20) scale(0.6400) translate(0,-100)"/><path d="M38,0 C16,8 2,24 0,46 L0,86 C0,95 6,100 13,100 L31,100 C39,100 44,95 44,87 L44,57 C44,49 39,44 31,44 L1,44" transform="translate(882.00,266.50) skewX(-20) scale(0.6400) translate(0,-100)"/></g><g fill="none" stroke="#ffffff" stroke-width="7.81" stroke-linecap="round" stroke-linejoin="round"><path d="M0,0 L18,0 C32,0 40,9 40,21 C40,36 30,46 15,46 C32,46 45,56 45,71 C45,89 34,100 20,100 L0,100" transform="translate(1302.70,266.50) skewX(-20) scale(0.6400) translate(0,-100)"/><path d="M0,16 L0,0 L53,0 L28,100" transform="translate(1338.00,266.50) skewX(-20) scale(0.6400) translate(0,-100)"/><path d="M2,20 C8,6 16,0 25,0 C37,0 45,9 45,22 C45,34 39,43 31,52 L0,100 L44,100" transform="translate(1386.20,266.50) skewX(-20) scale(0.6400) translate(0,-100)"/></g><g fill="none" stroke="#00ffff" stroke-width="8.16" stroke-linecap="round" stroke-linejoin="round"><path d="M25,0 C13,0 5,9 5,21 C5,34 13,43 25,43 C37,43 45,34 45,21 C45,9 37,0 25,0 Z M25,43 C10,43 0,51 0,64 L0,80 C0,92 9,100 20,100 L30,100 C41,100 50,92 50,80 L50,64 C50,51 40,43 25,43 Z" transform="translate(1360.40,484.40) skewX(0) scale(0.7350) translate(0,-100)"/></g><g fill="none" stroke="#00ffff" stroke-width="8.08" stroke-linecap="round" stroke-linejoin="round"><path d="M4,20 L28,0 L28,100" transform="translate(1542.30,853.60) skewX(0) scale(0.7430) translate(0,-100)"/><path d="M0,25 A25,25 0 0 1 50,25 L50,75 A25,25 0 0 1 0,75 Z" transform="translate(1577.70,853.60) skewX(0) scale(0.7430) translate(0,-100)"/></g><g fill="none" stroke="#00ffff" stroke-width="8.33" stroke-linecap="round" stroke-linejoin="round" transform="translate(1280,639) rotate(-90)"><path d="M38,0 C16,8 2,24 0,46 L0,86 C0,95 6,100 13,100 L31,100 C39,100 44,95 44,87 L44,57 C44,49 39,44 31,44 L1,44" transform="translate(0.00,0.00) skewX(0) scale(0.7200) translate(0,-100)"/></g><g fill="none" stroke="#00ffff" stroke-width="8.33" stroke-linecap="round" stroke-linejoin="round" transform="translate(1518,638) rotate(-90)"><path d="M38,0 C16,8 2,24 0,46 L0,86 C0,95 6,100 13,100 L31,100 C39,100 44,95 44,87 L44,57 C44,49 39,44 31,44 L1,44" transform="translate(0.00,0.00) skewX(0) scale(0.7200) translate(0,-100)"/></g><g fill="none" stroke="#00ffff" stroke-width="7.95" stroke-linecap="round" stroke-linejoin="round" transform="translate(1047.1,769.8) rotate(-90)"><path d="M4,20 L28,0 L28,100" transform="translate(0.00,0.00) skewX(0) scale(0.7300) translate(0,-100)"/><path d="M0,25 A25,25 0 0 1 50,25 L50,75 A25,25 0 0 1 0,75 Z" transform="translate(37.70,0.00) skewX(0) scale(0.7300) translate(0,-100)"/></g><g fill="none" stroke="#00ffff" stroke-width="7.95" stroke-linecap="round" stroke-linejoin="round" transform="translate(800.1,867.8) rotate(-90)"><path d="M4,20 L28,0 L28,100" transform="translate(0.00,0.00) skewX(0) scale(0.7300) translate(0,-100)"/><path d="M0,25 A25,25 0 0 1 50,25 L50,75 A25,25 0 0 1 0,75 Z" transform="translate(37.70,0.00) skewX(0) scale(0.7300) translate(0,-100)"/></g><g fill="none" stroke="#000" stroke-width="16.92" stroke-linecap="round" stroke-linejoin="round" transform="translate(1641,982.2) rotate(-90)"><path d="M4,20 L28,0 L28,100" transform="translate(0.00,0.00) skewX(-20) scale(0.6500) translate(0,-100)"/><path d="M19,0 L0,74 L50,74 M34,50 L34,100" transform="translate(30.00,0.00) skewX(-20) scale(0.6500) translate(0,-100)"/><path d="M0,25 A25,25 0 0 1 50,25 L50,75 A25,25 0 0 1 0,75 Z" transform="translate(74.40,0.00) skewX(-20) scale(0.6500) translate(0,-100)"/></g><g fill="none" stroke="#ffffff" stroke-width="10.15" stroke-linecap="round" stroke-linejoin="round" transform="translate(1641,982.2) rotate(-90)"><path d="M4,20 L28,0 L28,100" transform="translate(0.00,0.00) skewX(-20) scale(0.6500) translate(0,-100)"/><path d="M19,0 L0,74 L50,74 M34,50 L34,100" transform="translate(30.00,0.00) skewX(-20) scale(0.6500) translate(0,-100)"/><path d="M0,25 A25,25 0 0 1 50,25 L50,75 A25,25 0 0 1 0,75 Z" transform="translate(74.40,0.00) skewX(-20) scale(0.6500) translate(0,-100)"/></g><g fill="none" stroke="#ff0000" stroke-width="8.00" stroke-linecap="round" stroke-linejoin="round"><path d="M2,20 C8,6 16,0 25,0 C37,0 45,9 45,22 C45,34 39,43 31,52 L0,100 L44,100" transform="translate(347.00,963.00) skewX(-20) scale(0.6000) translate(0,-100)"/></g></svg><div class=a style="left:93px;top:126px;width:510px;height:782px;border-radius:7px 7px 3px 3px;background:linear-gradient(90deg,#2b2e33,#15171a 40%,#1a1c20 70%,#2a2d31);box-shadow:0 0 0 1px #555a60 inset"></div><div class=a style="left:96px;top:128px;width:504px;height:22px;background:radial-gradient(ellipse 250px 17px at 215px 11px,rgba(170,178,190,.85) 40%,rgba(120,130,140,0) 100%)"></div><svg class=a style="left:100px;top:131px" width="18" height="14"><path d="M17,1.5 C10,0 5,3 4,7 C4,11 9,13 14,12 L16,9 L11,9 C9,8.5 9,6 11,5 L17,5Z" fill="#e8441c"/><path d="M5,3 Q1,7 4,12 M7,2 Q3,7 6,12" stroke="#e8441c" stroke-width=".8" fill="none"/><rect x="11" y="6.5" width="5" height="1.2" fill="#fff"/></svg><div class=t style="left:121.0px;top:133.8px;font-size:12px;color:#101010;transform:scaleY(1.08);transform-origin:0 10.16px;">Отображение сварных швов v2.150116</div><div class=a style="left:494px;top:126px;width:103px;height:19px;border:1px solid #6a6e74;border-top:none;border-radius:0 0 4px 4px;box-sizing:border-box;display:flex;background:linear-gradient(#3c4046,#202226)"><div style="width:28px;border-right:1px solid #6a6e74;position:relative"><div style="position:absolute;left:9px;top:9px;width:11px;height:4px;background:#fff"></div></div><div style="width:27px;border-right:1px solid #6a6e74;position:relative"><div style="position:absolute;left:8px;top:4px;width:7px;height:5px;border:2px solid #777"></div></div><div style="flex:1;position:relative"><svg style="position:absolute;left:17px;top:4px" width="13" height="11"><path d="M2,1.5 L11,9.5 M11,1.5 L2,9.5" stroke="#fff" stroke-width="3"/></svg></div></div><div class=a style="left:99.0px;top:153.0px;width:498.0px;height:749.0px;background:#f0f0f0;border:1px solid #6a6e74;box-sizing:border-box"></div><div class=a style="left:100.0px;top:154.0px;width:496.0px;height:747.0px;background:#f0f0f0"></div><div class=a style="left:102px;top:157px;width:96px;height:17px;border:1px solid #898c95;border-bottom:none;background:linear-gradient(#f2f2f2,#ebebeb 50%,#dddddd 51%,#cfcfcf)"></div><div class=t style="left:107.0px;top:161.7px;font-size:11px;color:#000;transform:scaleY(1.08);transform-origin:0 9.31px;">Сравнить сборки</div><div class=a style="left:201px;top:157px;width:99px;height:17px;border:1px solid #898c95;border-bottom:none;background:linear-gradient(#f2f2f2,#ebebeb 50%,#dddddd 51%,#cfcfcf)"></div><div class=t style="left:206.0px;top:161.7px;font-size:11px;color:#000;transform:scaleY(1.08);transform-origin:0 9.31px;">Плагины чертежа</div><div class=a style="left:303px;top:157px;width:53px;height:17px;border:1px solid #898c95;border-bottom:none;background:linear-gradient(#f2f2f2,#ebebeb 50%,#dddddd 51%,#cfcfcf)"></div><div class=t style="left:308.0px;top:161.7px;font-size:11px;color:#000;transform:scaleY(1.08);transform-origin:0 9.31px;">x_Plugins</div><div class=a style="left:100.0px;top:193.0px;width:494.0px;height:638.0px;background:#fff;border:1px solid #898c95;box-sizing:border-box"></div><div class=a style="left:282px;top:176px;width:96px;height:17px;border:1px solid #898c95;border-bottom:none;background:linear-gradient(#f2f2f2,#ebebeb 50%,#dddddd 51%,#cfcfcf)"></div><div class=t style="left:288.0px;top:180.7px;font-size:11px;color:#000;transform:scaleY(1.08);transform-origin:0 9.31px;">Вставка таблицы</div><div class=a style="left:381px;top:176px;width:87px;height:17px;border:1px solid #898c95;border-bottom:none;background:linear-gradient(#f2f2f2,#ebebeb 50%,#dddddd 51%,#cfcfcf)"></div><div class=t style="left:387.0px;top:180.7px;font-size:11px;color:#000;transform:scaleY(1.08);transform-origin:0 9.31px;">Вставка текста</div><div class=a style="left:472px;top:176px;width:116px;height:17px;border:1px solid #898c95;border-bottom:none;background:linear-gradient(#f2f2f2,#ebebeb 50%,#dddddd 51%,#cfcfcf)"></div><div class=t style="left:478.0px;top:180.7px;font-size:11px;color:#000;transform:scaleY(1.08);transform-origin:0 9.31px;">Нумератор чертежей</div><div class=a style="left:100px;top:174px;width:181px;height:21px;border:1px solid #898c95;border-bottom:none;background:#fff"></div><div class=t style="left:108.0px;top:178.7px;font-size:11px;color:#000;transform:scaleY(1.08);transform-origin:0 9.31px;">Швы, разрезы, текстовые метки</div><div class=a style="left:105px;top:203px;width:281px;height:60px;border:1px solid #d5dfe5;border-radius:3px"></div><div class=t style="left:112px;top:197.5px;font-size:11px;line-height:13px;background:#fff;padding:0 2px;color:#000"><span style="display:inline-block;transform:scaleY(1.08);transform-origin:0 10.3px">Сварные швы</span></div><div class=a style="left:112px;top:211px;width:39px;height:23px;border:1px solid #000;background:#fff"></div><svg class=a style="left:112px;top:211px" width="41" height="25"><path d="M4.0,20.5 L39.0,20.5 M4.5,20.5 L4.5,11.5 M13.5,20.5 L13.5,11.5 M21.5,20.5 L21.5,11.5 M30.5,20.5 L30.5,11.5 M38.5,20.5 L38.5,11.5" stroke="#000" stroke-width="1" fill="none" shape-rendering="crispEdges"/></svg><div class=a style="left:112px;top:239px;width:39px;height:23px;border:1px solid #000;background:#fff"></div><svg class=a style="left:112px;top:239px" width="41" height="25"><path d="M4.5,19.5 L38.5,19.5 M5.5,10.5 L14.8,19.5 M5.5,19.5 L14.8,10.5 M16.8,10.5 L26.2,19.5 M16.8,19.5 L26.2,10.5 M28.2,10.5 L37.5,19.5 M28.2,19.5 L37.5,10.5" stroke="#000" stroke-width="1" fill="none" shape-rendering="crispEdges"/></svg><div class=a style="left:157px;top:211px;width:39px;height:23px;border:1px solid #000;background:#fff"></div><svg class=a style="left:157px;top:211px" width="41" height="25"><path d="M4.5,15.5 L38.5,15.5 M4.5,9.5 L4.5,21.5 M13.5,9.5 L13.5,21.5 M21.5,9.5 L21.5,21.5 M30.5,9.5 L30.5,21.5 M38.5,9.5 L38.5,21.5" stroke="#000" stroke-width="1" fill="none" shape-rendering="crispEdges"/></svg><div class=a style="left:157px;top:239px;width:39px;height:23px;border:1px solid #000;background:#fff"></div><svg class=a style="left:157px;top:239px" width="41" height="25"><path d="M4.5,15.5 L38.5,15.5 M5.5,10.5 L14.8,20.5 M5.5,20.5 L14.8,10.5 M16.8,10.5 L26.2,20.5 M16.8,20.5 L26.2,10.5 M28.2,10.5 L37.5,20.5 M28.2,20.5 L37.5,10.5" stroke="#000" stroke-width="1" fill="none" shape-rendering="crispEdges"/></svg><div class=a style="left:202px;top:211px;width:39px;height:23px;border:1px solid #000;background:#fff"></div><svg class=a style="left:202px;top:211px" width="41" height="25"><path d="M4.0,20.5 L39.0,20.5 M4.5,20.5 L4.5,11.5 M13.5,20.5 L13.5,11.5 M30.5,20.5 L30.5,11.5 M38.5,20.5 L38.5,11.5" stroke="#000" stroke-width="1" fill="none" shape-rendering="crispEdges"/></svg><div class=a style="left:202px;top:239px;width:39px;height:23px;border:1px solid #000;background:#fff"></div><svg class=a style="left:202px;top:239px" width="41" height="25"><path d="M4.5,19.5 L38.5,19.5 M5.5,10.5 L13.2,19.5 M5.5,19.5 L13.2,10.5 M29.8,10.5 L37.5,19.5 M29.8,19.5 L37.5,10.5" stroke="#000" stroke-width="1" fill="none" shape-rendering="crispEdges"/></svg><div class=a style="left:247px;top:211px;width:39px;height:23px;border:1px solid #000;background:#fff"></div><svg class=a style="left:247px;top:211px" width="41" height="25"><path d="M4.5,15.5 L38.5,15.5 M4.5,9.5 L4.5,21.5 M13.5,9.5 L13.5,21.5 M30.5,9.5 L30.5,21.5 M38.5,9.5 L38.5,21.5" stroke="#000" stroke-width="1" fill="none" shape-rendering="crispEdges"/></svg><div class=a style="left:247px;top:239px;width:39px;height:23px;border:1px solid #000;background:#fff"></div><svg class=a style="left:247px;top:239px" width="41" height="25"><path d="M4.5,15.5 L38.5,15.5 M5.5,10.5 L13.2,20.5 M5.5,20.5 L13.2,10.5 M29.8,10.5 L37.5,20.5 M29.8,20.5 L37.5,10.5" stroke="#000" stroke-width="1" fill="none" shape-rendering="crispEdges"/></svg><div class=a style="left:292px;top:211px;width:23px;height:23px;border:1px solid #000;background:#fff"></div><svg class=a style="left:292px;top:211px" width="25" height="25"><path d="M5,20 L23,20" stroke="#000" stroke-width="1.2"/><path d="M20,4 L20,20" stroke="#000" stroke-width="1.2"/><path d="M8,20 A12,12 0 0 1 20,8 L20,20Z" fill="#fcc400"/><rect x="17" y="16" width="6" height="6" fill="#ee1010"/><text x="3" y="10" font-size="8" font-family="Liberation Sans">1</text></svg><div class=a style="left:320px;top:211px;width:23px;height:23px;border:1px solid #000;background:#fff"></div><svg class=a style="left:320px;top:211px" width="25" height="25"><path d="M2,20 L22,20" stroke="#000" stroke-width="1.2"/><path d="M5,4 L5,20" stroke="#000" stroke-width="1.2"/><path d="M5,8 A12,12 0 0 1 17,20 L5,20Z" fill="#fcc400"/><rect x="2" y="16" width="6" height="6" fill="#ee1010"/><text x="18" y="10" font-size="8" font-family="Liberation Sans">2</text></svg><div class=a style="left:292px;top:239px;width:23px;height:23px;border:1px solid #000;background:#fff"></div><svg class=a style="left:292px;top:239px" width="25" height="25"><path d="M2,5 L23,5" stroke="#000" stroke-width="1.2"/><path d="M20,5 L20,22" stroke="#000" stroke-width="1.2"/><path d="M8,5 A12,12 0 0 0 20,17 L20,5Z" fill="#fcc400"/><rect x="17" y="2" width="6" height="6" fill="#ee1010"/><text x="3" y="22" font-size="8" font-family="Liberation Sans">3</text></svg><div class=a style="left:320px;top:239px;width:23px;height:23px;border:1px solid #000;background:#fff"></div><svg class=a style="left:320px;top:239px" width="25" height="25"><path d="M2,5 L23,5" stroke="#000" stroke-width="1.2"/><path d="M5,5 L5,22" stroke="#000" stroke-width="1.2"/><path d="M5,17 A12,12 0 0 0 17,5 L5,5Z" fill="#fcc400"/><rect x="2" y="2" width="6" height="6" fill="#ee1010"/><text x="18" y="22" font-size="8" font-family="Liberation Sans">4</text></svg><div class=a style="left:348px;top:211px;width:34px;height:23px;border:1px solid #000;background:#fff"></div><svg class=a style="left:348px;top:211px" width="36" height="25"><path d="M5,20 L32,20 M5,20 L20,6" stroke="#000" stroke-width="1.1"/><path d="M13,20 A10,10 0 0 0 11,14 L5,20Z" fill="#fcc400"/><path d="M5,20 L20,6 A24,24 0 0 1 20,6Z"/><path d="M10,15 L17,9 A14,14 0 0 1 20,20 L12,20Z" fill="#fcc400"/><rect x="3" y="18" width="5" height="5" fill="#e11"/><rect x="19" y="4" width="5" height="5" fill="#e11"/><rect x="26" y="18" width="5" height="5" fill="#e11"/><text x="4" y="16" font-size="7.5" font-family="Liberation Sans">1</text><text x="26" y="11" font-size="7.5" font-family="Liberation Sans">2</text><text x="31" y="23" font-size="7.5" font-family="Liberation Sans">3</text></svg><div class=a style="left:348px;top:239px;width:30px;height:19px;border:3px solid #000;background:#fff"></div><svg class=a style="left:348px;top:239px" width="36" height="25"><path d="M11,5 L11,21 L29,13Z" fill="#1e9e3c"/><path d="M11,13 L11,21 L29,13Z" fill="#147a2c"/></svg><div class=a style="left:105px;top:273px;width:281px;height:66px;border:1px solid #d5dfe5;border-radius:3px"></div><div class=t style="left:110px;top:267.5px;font-size:11px;line-height:13px;background:#fff;padding:0 2px;color:#000"><span style="display:inline-block;transform:scaleY(1.08);transform-origin:0 10.3px">Свойства сварного шва</span></div><div class=a style="left:111px;top:281px;width:39px;height:36px;border:1px solid #000;background:#fff"></div><svg class=a style="left:111px;top:281px" width="41" height="38"><path d="M20,3 L30,13 L25,13 L25,18 L15,18 L15,13 L10,13Z" fill="#18a0f0" stroke="#000" stroke-width="1"/><path d="M20,35 L30,25 L25,25 L25,21 L15,21 L15,25 L10,25Z" fill="#fcc400" stroke="#000" stroke-width="1"/><path d="M5,19.5 L36,19.5" stroke="#e00" stroke-width="1" stroke-dasharray="4,2,1,2"/></svg><div class=a style="left:156px;top:281px;width:39px;height:36px;border:1px solid #000;background:#fff"></div><svg class=a style="left:156px;top:281px" width="41" height="38"><path d="M11,11 L30,11 L28,33 Q20,36 13,33Z" fill="#c8c8c8" stroke="#999"/><ellipse cx="20.5" cy="10" rx="10" ry="3" fill="#d8d8d8" stroke="#999"/><path d="M15,14 L16,31 M20,14 L20,32 M25,14 L24,31" stroke="#a0a0a0"/></svg><div class=a style="left:201px;top:281px;width:39px;height:36px;border:1px solid #000;background:#fff"></div><svg class=a style="left:201px;top:281px" width="41" height="38"><path d="M30,3 L22,20" stroke="#b07040" stroke-width="2.5"/><path d="M17,18 L26,22 L20,35 Q12,34 8,28Z" fill="#f0d040" stroke="#c0a020"/><path d="M17,21 L25,25" stroke="#d03020" stroke-width="1.5"/></svg><div class=a style="left:246px;top:281px;width:35px;height:32px;border:3px solid #000;background:#fff"></div><svg class=a style="left:246px;top:281px" width="41" height="38"><path d="M9,9 Q6,4 10,3 L12,6 L15,5 L14,2 Q19,3 17,8 L31,25" stroke="#808080" stroke-width="4.5" fill="none" stroke-linecap="round"/><path d="M9,9 Q6,4 10,3 L12,6 L15,5 L14,2 Q19,3 17,8 L31,25" stroke="#e0e0e0" stroke-width="2.5" fill="none" stroke-linecap="round"/><circle cx="31" cy="27" r="4.5" fill="#d0d0d0" stroke="#606060"/><circle cx="31" cy="27" r="1.8" fill="#404040"/><path d="M9,31 L26,11" stroke="#202020" stroke-width="4.5" stroke-linecap="round"/><path d="M20,6 L30,3 L34,10 L28,14Z" fill="#404040"/><path d="M22,7 L29,5" stroke="#a0a0a0"/><path d="M3,21 L3,31 L12,26Z" fill="#1e9e3c"/></svg><div class=a style="left:111px;top:323px;width:11px;height:11px;border:1px solid #8e8f8f;background:linear-gradient(135deg,#dcdcdc,#fafafa)"></div><svg class=a style="left:111px;top:323px" width="13" height="13"><path d="M3,6.5 L5.5,10 L10,2.5" stroke="#4a5f97" stroke-width="1.8" fill="none"/></svg><div class=t style="left:130.0px;top:324.2px;font-size:11px;color:#000;transform:scaleY(1.08);transform-origin:0 9.31px;">Автомасштабирование симв.</div><div class=t style="left:301.0px;top:279.7px;font-size:11px;color:#000;transform:scaleY(1.08);transform-origin:0 9.31px;">Высота</div><div class=t style="left:301.0px;top:292.7px;font-size:11px;color:#000;transform:scaleY(1.08);transform-origin:0 9.31px;">засечки</div><div class=t style="left:301.0px;top:310.7px;font-size:11px;color:#000;transform:scaleY(1.08);transform-origin:0 9.31px;">Шаг</div><div class=t style="left:301.0px;top:323.7px;font-size:11px;color:#000;transform:scaleY(1.08);transform-origin:0 9.31px;">засечки</div><div class=a style="left:352px;top:281px;width:28px;height:18px;border:1px solid #abadb3;border-color:#abadb3 #dbdfe6 #e3e9ef #e2e3ea;background:#f0f0f0;border-radius:2px"></div><div class=t style="left:355.0px;top:285.3px;font-size:11.5px;color:#808080;transform:scaleY(1.08);transform-origin:0 9.73px;">2</div><div class=a style="left:353px;top:315px;width:28px;height:18px;border:1px solid #abadb3;border-color:#abadb3 #dbdfe6 #e3e9ef #e2e3ea;background:#f0f0f0;border-radius:2px"></div><div class=t style="left:356.0px;top:319.3px;font-size:11.5px;color:#808080;transform:scaleY(1.08);transform-origin:0 9.73px;">2</div><div class=a style="left:395px;top:203px;width:103px;height:68px;border:1px solid #d5dfe5;border-radius:3px"></div><div class=t style="left:400px;top:197.5px;font-size:11px;line-height:13px;background:#fff;padding:0 2px;color:#000"><span style="display:inline-block;transform:scaleY(1.08);transform-origin:0 10.3px">Сварной шов</span></div><div class=a style="left:398px;top:212px;width:10px;height:10px;border-radius:50%;border:1px solid #9a9a9a;background:radial-gradient(circle at 50% 70%,#fafafa,#d8d8d8 70%,#c8c8c8)"></div><div class=a style="left:400px;top:214px;width:6px;height:6px;border-radius:50%;border:1px solid #173a5c;background:radial-gradient(circle at 45% 35%,#b8f0ff,#2aa0e0 50%,#1060a8)"></div><div class=t style="left:416.0px;top:212.7px;font-size:11px;color:#000;transform:scaleY(1.08);transform-origin:0 9.31px;">по линии</div><div class=a style="left:398px;top:227px;width:10px;height:10px;border-radius:50%;border:1px solid #9a9a9a;background:radial-gradient(circle at 50% 70%,#fafafa,#d8d8d8 70%,#c8c8c8)"></div><div class=t style="left:416.0px;top:227.7px;font-size:11px;color:#000;transform:scaleY(1.08);transform-origin:0 9.31px;">по кругу</div><div class=a style="left:398px;top:243px;width:10px;height:10px;border-radius:50%;border:1px solid #9a9a9a;background:radial-gradient(circle at 50% 70%,#fafafa,#d8d8d8 70%,#c8c8c8)"></div><div class=t style="left:416.0px;top:243.7px;font-size:11px;color:#000;transform:scaleY(1.08);transform-origin:0 9.31px;">по дуге (центр)</div><div class=a style="left:398px;top:259px;width:10px;height:10px;border-radius:50%;border:1px solid #9a9a9a;background:radial-gradient(circle at 50% 70%,#fafafa,#d8d8d8 70%,#c8c8c8)"></div><div class=t style="left:416.0px;top:259.7px;font-size:11px;color:#000;transform:scaleY(1.08);transform-origin:0 9.31px;">по дуге (3 тчк.)</div><div class=a style="left:395px;top:283px;width:103px;height:56px;border:1px solid #d5dfe5;border-radius:3px"></div><div class=t style="left:400px;top:277.5px;font-size:11px;line-height:13px;background:#fff;padding:0 2px;color:#000"><span style="display:inline-block;transform:scaleY(1.08);transform-origin:0 10.3px">Линии обрыва</span></div><div class=a style="left:401px;top:291px;width:41px;height:23px;border:1px solid #000;background:#fff"></div><svg class=a style="left:401px;top:291px" width="43" height="25"><path d="M5,13 L14,13 L18,8 L23,18 L27,13 L38,13" stroke="#000" stroke-width="1" fill="none"/></svg><div class=a style="left:450px;top:291px;width:41px;height:23px;border:1px solid #000;background:#fff"></div><svg class=a style="left:450px;top:291px" width="43" height="25"><path d="M5,6 L37,6 L37,17 Q34,20 28,18 Q25,13 21,14 Q17,13 14,18 Q9,20 6,17Z" fill="none" stroke="#000" stroke-width="1"/><ellipse cx="12" cy="14" rx="6" ry="3.5" fill="none" stroke="#000"/><path d="M8,8 L36,8 M8,10 L36,10 M20,12 L36,12" stroke="#000" stroke-dasharray="1,1.5" stroke-width="1"/></svg><div class=t style="left:410.0px;top:324.2px;font-size:11px;color:#000;transform:scaleY(1.08);transform-origin:0 9.31px;">Масштаб</div><div class=a style="left:463px;top:319px;width:28px;height:18px;border:1px solid #abadb3;border-color:#abadb3 #dbdfe6 #e3e9ef #e2e3ea;background:#fff;border-radius:2px"></div><div class=t style="left:466.0px;top:323.3px;font-size:11.5px;color:#000;transform:scaleY(1.08);transform-origin:0 9.73px;">1</div><div class=a style="left:506px;top:203px;width:82px;height:136px;border:1px solid #d5dfe5;border-radius:3px"></div><div class=t style="left:513px;top:197.5px;font-size:11px;line-height:13px;background:#fff;padding:0 2px;color:#000"><span style="display:inline-block;transform:scaleY(1.08);transform-origin:0 10.3px">Текст</span></div><div class=a style="left:512px;top:211.0px;width:10px;height:10px;border-radius:50%;border:1px solid #9a9a9a;background:radial-gradient(circle at 50% 70%,#fafafa,#d8d8d8 70%,#c8c8c8)"></div><div class=a style="left:514px;top:213.0px;width:6px;height:6px;border-radius:50%;border:1px solid #173a5c;background:radial-gradient(circle at 45% 35%,#b8f0ff,#2aa0e0 50%,#1060a8)"></div><div class=t style="left:531.0px;top:211.3px;font-size:11.5px;color:#000;transform:scaleY(1.08);transform-origin:0 9.73px;">4</div><div class=a style="left:551px;top:211.0px;width:10px;height:10px;border-radius:50%;border:1px solid #9a9a9a;background:radial-gradient(circle at 50% 70%,#fafafa,#d8d8d8 70%,#c8c8c8)"></div><div class=t style="left:570.0px;top:211.3px;font-size:11.5px;color:#000;transform:scaleY(1.08);transform-origin:0 9.73px;">5</div><div class=a style="left:512px;top:227.5px;width:10px;height:10px;border-radius:50%;border:1px solid #9a9a9a;background:radial-gradient(circle at 50% 70%,#fafafa,#d8d8d8 70%,#c8c8c8)"></div><div class=t style="left:531.0px;top:227.8px;font-size:11.5px;color:#000;transform:scaleY(1.08);transform-origin:0 9.73px;">6</div><div class=a style="left:551px;top:227.5px;width:10px;height:10px;border-radius:50%;border:1px solid #9a9a9a;background:radial-gradient(circle at 50% 70%,#fafafa,#d8d8d8 70%,#c8c8c8)"></div><div class=t style="left:570.0px;top:227.8px;font-size:11.5px;color:#000;transform:scaleY(1.08);transform-origin:0 9.73px;">7</div><div class=a style="left:512px;top:244.0px;width:10px;height:10px;border-radius:50%;border:1px solid #9a9a9a;background:radial-gradient(circle at 50% 70%,#fafafa,#d8d8d8 70%,#c8c8c8)"></div><div class=t style="left:531.0px;top:244.3px;font-size:11.5px;color:#000;transform:scaleY(1.08);transform-origin:0 9.73px;">8</div><div class=a style="left:551px;top:244.0px;width:10px;height:10px;border-radius:50%;border:1px solid #9a9a9a;background:radial-gradient(circle at 50% 70%,#fafafa,#d8d8d8 70%,#c8c8c8)"></div><div class=t style="left:570.0px;top:244.3px;font-size:11.5px;color:#000;transform:scaleY(1.08);transform-origin:0 9.73px;">9</div><div class=a style="left:512px;top:260.5px;width:10px;height:10px;border-radius:50%;border:1px solid #9a9a9a;background:radial-gradient(circle at 50% 70%,#fafafa,#d8d8d8 70%,#c8c8c8)"></div><div class=t style="left:531.0px;top:260.8px;font-size:11.5px;color:#000;transform:scaleY(1.08);transform-origin:0 9.73px;">10</div><div class=a style="left:551px;top:260.5px;width:10px;height:10px;border-radius:50%;border:1px solid #9a9a9a;background:radial-gradient(circle at 50% 70%,#fafafa,#d8d8d8 70%,#c8c8c8)"></div><div class=t style="left:570.0px;top:260.8px;font-size:11.5px;color:#000;transform:scaleY(1.08);transform-origin:0 9.73px;">11</div><div class=a style="left:512px;top:277.0px;width:10px;height:10px;border-radius:50%;border:1px solid #9a9a9a;background:radial-gradient(circle at 50% 70%,#fafafa,#d8d8d8 70%,#c8c8c8)"></div><div class=t style="left:531.0px;top:277.3px;font-size:11.5px;color:#000;transform:scaleY(1.08);transform-origin:0 9.73px;">12</div><div class=a style="left:551px;top:277.0px;width:10px;height:10px;border-radius:50%;border:1px solid #9a9a9a;background:radial-gradient(circle at 50% 70%,#fafafa,#d8d8d8 70%,#c8c8c8)"></div><div class=t style="left:570.0px;top:277.3px;font-size:11.5px;color:#000;transform:scaleY(1.08);transform-origin:0 9.73px;">13</div><div class=t style="left:511.0px;top:297.7px;font-size:11px;color:#000;transform:scaleY(1.08);transform-origin:0 9.31px;">Размер</div><div class=a style="left:552px;top:293px;width:31px;height:18px;border:1px solid #a8a8a8;background:#fff"></div><div class=t style="left:555.0px;top:296.9px;font-size:11.5px;color:#000;transform:scaleY(1.08);transform-origin:0 9.73px;">2</div><svg class=a style="left:569px;top:295px" width="14" height="16"><rect x="0.5" y="0.5" width="13" height="7" fill="#ececec" stroke="#a8a8a8"/><rect x="0.5" y="8.5" width="13" height="7" fill="#ececec" stroke="#a8a8a8"/><path d="M4,5.5 L7,2.5 L10,5.5Z M4,10.5 L7,13.5 L10,10.5Z" fill="#5a6aa8"/></svg><div class=a style="left:512px;top:316px;width:31px;height:21px;border:1px solid #000;background:#fff"></div><svg class=a style="left:512px;top:316px" width="33" height="23"><text x="10" y="16" font-size="12" font-family="Liberation Sans">K</text></svg><div class=a style="left:552px;top:316px;width:31px;height:21px;border:1px solid #000;background:#fff"></div><svg class=a style="left:552px;top:316px" width="33" height="23"><rect x="8.5" y="3.5" width="16" height="15" fill="none" stroke="#000" stroke-width="1"/><text x="11" y="16" font-size="12" font-family="Liberation Sans">K</text></svg><div class=a style="left:106px;top:349px;width:482px;height:48px;border:1px solid #d5dfe5;border-radius:3px"></div><div class=t style="left:111px;top:343.5px;font-size:11px;line-height:13px;background:#fff;padding:0 2px;color:#000"><span style="display:inline-block;transform:scaleY(1.08);transform-origin:0 10.3px">Состав текстовой метки шва</span></div><div class=a style="left:114px;top:360px;width:11px;height:11px;border:1px solid #8e8f8f;background:linear-gradient(135deg,#dcdcdc,#fafafa)"></div><div class=t style="left:133.0px;top:361.2px;font-size:11px;color:#000;transform:scaleY(1.08);transform-origin:0 9.31px;">Префикс шва</div><div class=a style="left:219px;top:360px;width:11px;height:11px;border:1px solid #8e8f8f;background:linear-gradient(135deg,#dcdcdc,#fafafa)"></div><div class=t style="left:238.0px;top:361.2px;font-size:11px;color:#000;transform:scaleY(1.08);transform-origin:0 9.31px;">Префикс</div><div class=a style="left:290px;top:354px;width:28px;height:18px;border:1px solid #abadb3;border-color:#abadb3 #dbdfe6 #e3e9ef #e2e3ea;background:#f0f0f0;border-radius:2px"></div><div class=a style="left:330px;top:358px;width:11px;height:11px;border:1px solid #8e8f8f;background:linear-gradient(135deg,#dcdcdc,#fafafa)"></div><svg class=a style="left:330px;top:358px" width="13" height="13"><path d="M3,6.5 L5.5,10 L10,2.5" stroke="#4a5f97" stroke-width="1.8" fill="none"/></svg><div class=t style="left:349.5px;top:359.2px;font-size:11px;color:#000;transform:scaleY(1.08);transform-origin:0 9.31px;">Катет</div><div class=a style="left:390px;top:357px;width:11px;height:11px;border:1px solid #8e8f8f;background:linear-gradient(135deg,#dcdcdc,#fafafa)"></div><div class=t style="left:409.0px;top:359.2px;font-size:11px;color:#000;transform:scaleY(1.08);transform-origin:0 9.31px;">Постфикс</div><div class=a style="left:468px;top:353px;width:28px;height:18px;border:1px solid #abadb3;border-color:#abadb3 #dbdfe6 #e3e9ef #e2e3ea;background:#f0f0f0;border-radius:2px"></div><div class=a style="left:504px;top:357px;width:11px;height:11px;border:1px solid #8e8f8f;background:linear-gradient(135deg,#dcdcdc,#fafafa)"></div><div class=t style="left:523.0px;top:359.2px;font-size:11px;color:#000;transform:scaleY(1.08);transform-origin:0 9.31px;">Длина шва</div><div class=a style="left:110px;top:377px;width:296px;height:18px;border:1px solid #707070;border-radius:3px;background:linear-gradient(#f2f2f2,#ebebeb 50%,#dddddd 51%,#cfcfcf)"></div><div class=t style="left:113.0px;top:382.3px;font-size:11.5px;color:#000;transform:scaleY(1.08);transform-origin:0 9.73px;">Gothicl</div><svg class=a style="left:395px;top:384px" width="9" height="5"><path d="M0,0 L8,0 L4,4Z" fill="#000"/></svg><div class=a style="left:417px;top:377px;width:14px;height:14px;border:3px solid #000;background:#fff"></div><svg class=a style="left:417px;top:377px" width="20" height="20"><path d="M4,7 Q10,9 16,7 M10,6 L10,13 M5,13 L15,13 M6,10 L9,13 M14,10 L11,13" stroke="#000" stroke-width="2" fill="none"/></svg><div class=a style="left:444px;top:377px;width:14px;height:14px;border:3px solid #000;background:#fff"></div><svg class=a style="left:444px;top:377px" width="20" height="20"><text x="6" y="14" font-size="10" font-style="italic" font-family="Liberation Sans">k</text></svg><div class=a style="left:472px;top:377px;width:14px;height:14px;border:3px solid #000;background:#fff"></div><svg class=a style="left:472px;top:377px" width="20" height="20"><text x="5" y="14" font-size="10" font-family="Liberation Sans">u</text></svg><div class=a style="left:499px;top:377px;width:75px;height:18px;border:1px solid #dadada;border-radius:2px;background:#fff"></div><div class=a style="left:504.0px;top:385.0px;width:45.0px;height:4.0px;background:#00e8f0"></div><svg class=a style="left:564px;top:385px" width="9" height="5"><path d="M0,0 L8,0 L4,4Z" fill="#000"/></svg><div class=a style="left:106px;top:408px;width:482px;height:26px;border:1px solid #d5dfe5;border-radius:3px"></div><div class=t style="left:111px;top:402.5px;font-size:11px;line-height:13px;background:#fff;padding:0 2px;color:#000"><span style="display:inline-block;transform:scaleY(1.08);transform-origin:0 10.3px">Положение сварки брать из:</span></div><div class=a style="left:114px;top:419px;width:10px;height:10px;border-radius:50%;border:1px solid #9a9a9a;background:radial-gradient(circle at 50% 70%,#fafafa,#d8d8d8 70%,#c8c8c8)"></div><div class=a style="left:116px;top:421px;width:6px;height:6px;border-radius:50%;border:1px solid #173a5c;background:radial-gradient(circle at 45% 35%,#b8f0ff,#2aa0e0 50%,#1060a8)"></div><div class=t style="left:133.0px;top:419.7px;font-size:11px;color:#000;transform:scaleY(1.08);transform-origin:0 9.31px;">Модели</div><div class=a style="left:185px;top:419px;width:10px;height:10px;border-radius:50%;border:1px solid #9a9a9a;background:radial-gradient(circle at 50% 70%,#fafafa,#d8d8d8 70%,#c8c8c8)"></div><div class=t style="left:203.5px;top:419.7px;font-size:11px;color:#000;transform:scaleY(1.08);transform-origin:0 9.31px;">Создать программно</div><div class=t style="left:330.0px;top:419.7px;font-size:11px;color:#a0a0a0;transform:scaleY(1.08);transform-origin:0 9.31px;">Учитывать сварку:</div><div class=a style="left:435px;top:418px;width:11px;height:11px;border:1px solid #b8b8b8;background:linear-gradient(135deg,#dcdcdc,#fafafa)"></div><div class=t style="left:453.5px;top:419.7px;font-size:11px;color:#000;transform:scaleY(1.08);transform-origin:0 9.31px;">по линии</div><div class=a style="left:512px;top:418px;width:11px;height:11px;border:1px solid #b8b8b8;background:linear-gradient(135deg,#dcdcdc,#fafafa)"></div><svg class=a style="left:512px;top:418px" width="13" height="13"><path d="M3,6.5 L5.5,10 L10,2.5" stroke="#a8b0c0" stroke-width="1.8" fill="none"/></svg><div class=t style="left:530.0px;top:419.7px;font-size:11px;color:#000;transform:scaleY(1.08);transform-origin:0 9.31px;">по кругу</div><div class=a style="left:106px;top:444px;width:232px;height:128px;border:1px solid #d5dfe5;border-radius:3px"></div><div class=t style="left:116px;top:437px;width:185px;height:13px;background:#fff"></div><svg class=a style="left:118px;top:440px" width="22" height="10"><path d="M1,9 L4,5 L20,5" stroke="#000" fill="none"/></svg><div class=t style="left:144.0px;top:439.2px;font-size:11px;color:#000;transform:scaleY(1.08);transform-origin:0 9.31px;">Отображение заводских швов</div><div class=t style="left:112.0px;top:458.7px;font-size:11px;color:#000;transform:scaleY(1.08);transform-origin:0 9.31px;">Цвет</div><div class=a style="left:145px;top:454px;width:57px;height:19px;border:1px solid #d8d8d8;border-radius:2px;background:#fff"></div><div class=a style="left:150.0px;top:462.0px;width:35.0px;height:4.0px;background:#009a10"></div><svg class=a style="left:191px;top:463px" width="9" height="5"><path d="M0,0 L8,0 L4,4Z" fill="#000"/></svg><div class=t style="left:220.0px;top:458.7px;font-size:11px;color:#000;transform:scaleY(1.08);transform-origin:0 9.31px;">Отображать</div><div class=a style="left:287px;top:457px;width:11px;height:11px;border:1px solid #8e8f8f;background:linear-gradient(135deg,#dcdcdc,#fafafa)"></div><svg class=a style="left:287px;top:457px" width="13" height="13"><path d="M3,6.5 L5.5,10 L10,2.5" stroke="#4a5f97" stroke-width="1.8" fill="none"/></svg><svg class=a style="left:306px;top:452px" width="21" height="20"><path d="M1,18.5 L19,18.5 L19,1" stroke="#000" stroke-width="1.3" fill="none"/><path d="M5,18 A14,14 0 0 1 18,6 L18,18Z" fill="#fcc400" stroke="#000" stroke-width="0.8"/></svg><div class=a style="left:112.0px;top:478.0px;width:220.0px;height:1.5px;background:#000"></div><div class=t style="left:135.0px;top:483.2px;font-size:11px;color:#000;transform:scaleY(1.08);transform-origin:0 9.31px;">Тип шва</div><div class=t style="left:214.0px;top:483.2px;font-size:11px;color:#000;transform:scaleY(1.08);transform-origin:0 9.31px;">Метка</div><div class=t style="left:262.0px;top:483.2px;font-size:11px;color:#000;transform:scaleY(1.08);transform-origin:0 9.31px;">Рис. символ</div><svg class=a style="left:111px;top:501.0px" width="14" height="13"><path d="M2,1.5 L2,11 L12,11 Z" fill="none" stroke="#000" stroke-width="2.2"/></svg><div class=t style="left:133.0px;top:502.2px;font-size:11px;color:#000;transform:scaleY(1.08);transform-origin:0 9.31px;">Видимый</div><div class=a style="left:227px;top:501.0px;width:11px;height:11px;border:1px solid #8e8f8f;background:linear-gradient(135deg,#dcdcdc,#fafafa)"></div><svg class=a style="left:227px;top:501.0px" width="13" height="13"><path d="M3,6.5 L5.5,10 L10,2.5" stroke="#4a5f97" stroke-width="1.8" fill="none"/></svg><div class=a style="left:268px;top:501.0px;width:11px;height:11px;border:1px solid #8e8f8f;background:linear-gradient(135deg,#dcdcdc,#fafafa)"></div><svg class=a style="left:268px;top:501.0px" width="13" height="13"><path d="M3,6.5 L5.5,10 L10,2.5" stroke="#4a5f97" stroke-width="1.8" fill="none"/></svg><svg class=a style="left:287px;top:493.0px" width="40" height="24"><path d="M1.0,19.5 L36.0,19.5 M1.5,19.5 L1.5,10.5 M10.5,19.5 L10.5,10.5 M18.5,19.5 L18.5,10.5 M27.5,19.5 L27.5,10.5 M35.5,19.5 L35.5,10.5" stroke="#000" stroke-width="1" fill="none" shape-rendering="crispEdges"/></svg><svg class=a style="left:111px;top:520.2px" width="14" height="13"><path d="M2,1.5 L2,11 L12,11 Z" fill="none" stroke="#000" stroke-width="2.2"/></svg><div class=t style="left:133.0px;top:521.4px;font-size:11px;color:#000;transform:scaleY(1.08);transform-origin:0 9.31px;">Невидимый</div><div class=a style="left:227px;top:520.2px;width:11px;height:11px;border:1px solid #8e8f8f;background:linear-gradient(135deg,#dcdcdc,#fafafa)"></div><svg class=a style="left:227px;top:520.2px" width="13" height="13"><path d="M3,6.5 L5.5,10 L10,2.5" stroke="#4a5f97" stroke-width="1.8" fill="none"/></svg><div class=a style="left:268px;top:520.2px;width:11px;height:11px;border:1px solid #8e8f8f;background:linear-gradient(135deg,#dcdcdc,#fafafa)"></div><svg class=a style="left:268px;top:520.2px" width="13" height="13"><path d="M3,6.5 L5.5,10 L10,2.5" stroke="#4a5f97" stroke-width="1.8" fill="none"/></svg><svg class=a style="left:287px;top:512.2px" width="40" height="24"><path d="M1.0,19.5 L36.0,19.5 M1.5,19.5 L1.5,10.5 M10.5,19.5 L10.5,10.5 M27.5,19.5 L27.5,10.5 M35.5,19.5 L35.5,10.5" stroke="#000" stroke-width="1" fill="none" shape-rendering="crispEdges"/></svg><svg class=a style="left:111px;top:539.4px" width="14" height="13"><path d="M1,1 L6.5,12 L12,1" fill="none" stroke="#000" stroke-width="1.5"/></svg><div class=t style="left:133.0px;top:540.6px;font-size:11px;color:#000;transform:scaleY(1.08);transform-origin:0 9.31px;">Стыковой видим</div><div class=a style="left:227px;top:539.4px;width:11px;height:11px;border:1px solid #8e8f8f;background:linear-gradient(135deg,#dcdcdc,#fafafa)"></div><div class=a style="left:268px;top:539.4px;width:11px;height:11px;border:1px solid #8e8f8f;background:linear-gradient(135deg,#dcdcdc,#fafafa)"></div><svg class=a style="left:268px;top:539.4px" width="13" height="13"><path d="M3,6.5 L5.5,10 L10,2.5" stroke="#4a5f97" stroke-width="1.8" fill="none"/></svg><svg class=a style="left:287px;top:531.4px" width="40" height="24"><path d="M1.5,15.5 L35.5,15.5 M1.5,9.5 L1.5,21.5 M10.5,9.5 L10.5,21.5 M18.5,9.5 L18.5,21.5 M27.5,9.5 L27.5,21.5 M35.5,9.5 L35.5,21.5" stroke="#000" stroke-width="1" fill="none" shape-rendering="crispEdges"/></svg><svg class=a style="left:111px;top:558.6px" width="14" height="13"><path d="M1,1 L6.5,12 L12,1" fill="none" stroke="#000" stroke-width="1.5"/></svg><div class=t style="left:133.0px;top:559.8px;font-size:11px;color:#000;transform:scaleY(1.08);transform-origin:0 9.31px;">Стыковой невид</div><div class=a style="left:227px;top:558.6px;width:11px;height:11px;border:1px solid #8e8f8f;background:linear-gradient(135deg,#dcdcdc,#fafafa)"></div><div class=a style="left:268px;top:558.6px;width:11px;height:11px;border:1px solid #8e8f8f;background:linear-gradient(135deg,#dcdcdc,#fafafa)"></div><svg class=a style="left:287px;top:550.6px" width="40" height="24"><path d="M1.5,15.5 L35.5,15.5 M1.5,9.5 L1.5,21.5 M10.5,9.5 L10.5,21.5 M27.5,9.5 L27.5,21.5 M35.5,9.5 L35.5,21.5" stroke="#000" stroke-width="1" fill="none" shape-rendering="crispEdges"/></svg><div class=a style="left:357px;top:444px;width:231px;height:128px;border:1px solid #d5dfe5;border-radius:3px"></div><div class=t style="left:367px;top:437px;width:189px;height:13px;background:#fff"></div><svg class=a style="left:369px;top:436px" width="22" height="14"><path d="M1,12 L4,8 L20,8 M5,8 L5,1 L12,3.5 L5,5" stroke="#000" fill="none"/></svg><div class=t style="left:394.0px;top:439.2px;font-size:11px;color:#000;transform:scaleY(1.08);transform-origin:0 9.31px;">Отображение монтажных швов</div><div class=t style="left:363.0px;top:458.7px;font-size:11px;color:#000;transform:scaleY(1.08);transform-origin:0 9.31px;">Цвет</div><div class=a style="left:396px;top:454px;width:57px;height:19px;border:1px solid #d8d8d8;border-radius:2px;background:#fff"></div><div class=a style="left:401.0px;top:462.0px;width:35.0px;height:4.0px;background:#009a10"></div><svg class=a style="left:442px;top:463px" width="9" height="5"><path d="M0,0 L8,0 L4,4Z" fill="#000"/></svg><div class=t style="left:471.0px;top:458.7px;font-size:11px;color:#000;transform:scaleY(1.08);transform-origin:0 9.31px;">Отображать</div><div class=a style="left:538px;top:457px;width:11px;height:11px;border:1px solid #8e8f8f;background:linear-gradient(135deg,#dcdcdc,#fafafa)"></div><svg class=a style="left:538px;top:457px" width="13" height="13"><path d="M3,6.5 L5.5,10 L10,2.5" stroke="#4a5f97" stroke-width="1.8" fill="none"/></svg><svg class=a style="left:556px;top:452px" width="21" height="20"><path d="M1,18.5 L19,18.5 L19,1" stroke="#000" stroke-width="1.3" fill="none"/><path d="M3,4 L18,18 M3,18 L18,4" stroke="#fcc400" stroke-width="2.5"/><path d="M3,4 L18,18 M3,18 L18,4" stroke="#000" stroke-width="0.6"/></svg><div class=a style="left:363.0px;top:478.0px;width:220.0px;height:1.5px;background:#000"></div><div class=t style="left:386.0px;top:483.2px;font-size:11px;color:#000;transform:scaleY(1.08);transform-origin:0 9.31px;">Тип шва</div><div class=t style="left:465.0px;top:483.2px;font-size:11px;color:#000;transform:scaleY(1.08);transform-origin:0 9.31px;">Метка</div><div class=t style="left:513.0px;top:483.2px;font-size:11px;color:#000;transform:scaleY(1.08);transform-origin:0 9.31px;">Рис. символ</div><svg class=a style="left:362px;top:501.0px" width="14" height="13"><path d="M2,1.5 L2,11 L12,11 Z" fill="none" stroke="#000" stroke-width="2.2"/></svg><div class=t style="left:384.0px;top:502.2px;font-size:11px;color:#000;transform:scaleY(1.08);transform-origin:0 9.31px;">Видимый</div><div class=a style="left:478px;top:501.0px;width:11px;height:11px;border:1px solid #8e8f8f;background:linear-gradient(135deg,#dcdcdc,#fafafa)"></div><svg class=a style="left:478px;top:501.0px" width="13" height="13"><path d="M3,6.5 L5.5,10 L10,2.5" stroke="#4a5f97" stroke-width="1.8" fill="none"/></svg><div class=a style="left:519px;top:501.0px;width:11px;height:11px;border:1px solid #8e8f8f;background:linear-gradient(135deg,#dcdcdc,#fafafa)"></div><svg class=a style="left:519px;top:501.0px" width="13" height="13"><path d="M3,6.5 L5.5,10 L10,2.5" stroke="#4a5f97" stroke-width="1.8" fill="none"/></svg><svg class=a style="left:538px;top:493.0px" width="40" height="24"><path d="M1.5,18.5 L35.5,18.5 M2.5,9.5 L11.8,18.5 M2.5,18.5 L11.8,9.5 M13.8,9.5 L23.2,18.5 M13.8,18.5 L23.2,9.5 M25.2,9.5 L34.5,18.5 M25.2,18.5 L34.5,9.5" stroke="#000" stroke-width="1" fill="none" shape-rendering="crispEdges"/></svg><svg class=a style="left:362px;top:520.2px" width="14" height="13"><path d="M2,1.5 L2,11 L12,11 Z" fill="none" stroke="#000" stroke-width="2.2"/></svg><div class=t style="left:384.0px;top:521.4px;font-size:11px;color:#000;transform:scaleY(1.08);transform-origin:0 9.31px;">Невидимый</div><div class=a style="left:478px;top:520.2px;width:11px;height:11px;border:1px solid #8e8f8f;background:linear-gradient(135deg,#dcdcdc,#fafafa)"></div><svg class=a style="left:478px;top:520.2px" width="13" height="13"><path d="M3,6.5 L5.5,10 L10,2.5" stroke="#4a5f97" stroke-width="1.8" fill="none"/></svg><div class=a style="left:519px;top:520.2px;width:11px;height:11px;border:1px solid #8e8f8f;background:linear-gradient(135deg,#dcdcdc,#fafafa)"></div><svg class=a style="left:519px;top:520.2px" width="13" height="13"><path d="M3,6.5 L5.5,10 L10,2.5" stroke="#4a5f97" stroke-width="1.8" fill="none"/></svg><svg class=a style="left:538px;top:512.2px" width="40" height="24"><path d="M1.5,18.5 L35.5,18.5 M2.5,9.5 L10.2,18.5 M2.5,18.5 L10.2,9.5 M26.8,9.5 L34.5,18.5 M26.8,18.5 L34.5,9.5" stroke="#000" stroke-width="1" fill="none" shape-rendering="crispEdges"/></svg><svg class=a style="left:362px;top:539.4px" width="14" height="13"><path d="M1,1 L6.5,12 L12,1" fill="none" stroke="#000" stroke-width="1.5"/></svg><div class=t style="left:384.0px;top:540.6px;font-size:11px;color:#000;transform:scaleY(1.08);transform-origin:0 9.31px;">Стыковой видим</div><div class=a style="left:478px;top:539.4px;width:11px;height:11px;border:1px solid #8e8f8f;background:linear-gradient(135deg,#dcdcdc,#fafafa)"></div><div class=a style="left:519px;top:539.4px;width:11px;height:11px;border:1px solid #8e8f8f;background:linear-gradient(135deg,#dcdcdc,#fafafa)"></div><svg class=a style="left:519px;top:539.4px" width="13" height="13"><path d="M3,6.5 L5.5,10 L10,2.5" stroke="#4a5f97" stroke-width="1.8" fill="none"/></svg><svg class=a style="left:538px;top:531.4px" width="40" height="24"><path d="M1.5,15.5 L35.5,15.5 M2.5,10.5 L11.8,20.5 M2.5,20.5 L11.8,10.5 M13.8,10.5 L23.2,20.5 M13.8,20.5 L23.2,10.5 M25.2,10.5 L34.5,20.5 M25.2,20.5 L34.5,10.5" stroke="#000" stroke-width="1" fill="none" shape-rendering="crispEdges"/></svg><svg class=a style="left:362px;top:558.6px" width="14" height="13"><path d="M1,1 L6.5,12 L12,1" fill="none" stroke="#000" stroke-width="1.5"/></svg><div class=t style="left:384.0px;top:559.8px;font-size:11px;color:#000;transform:scaleY(1.08);transform-origin:0 9.31px;">Стыковой невид</div><div class=a style="left:478px;top:558.6px;width:11px;height:11px;border:1px solid #8e8f8f;background:linear-gradient(135deg,#dcdcdc,#fafafa)"></div><div class=a style="left:519px;top:558.6px;width:11px;height:11px;border:1px solid #8e8f8f;background:linear-gradient(135deg,#dcdcdc,#fafafa)"></div><svg class=a style="left:538px;top:550.6px" width="40" height="24"><path d="M1.5,15.5 L35.5,15.5 M2.5,10.5 L10.2,20.5 M2.5,20.5 L10.2,10.5 M26.8,10.5 L34.5,20.5 M26.8,20.5 L34.5,10.5" stroke="#000" stroke-width="1" fill="none" shape-rendering="crispEdges"/></svg><div class=a style="left:106px;top:585px;width:482px;height:243px;border:1px solid #d5dfe5;border-radius:3px"></div><div class=t style="left:110px;top:578px;width:390px;height:14px;background:#fff"></div><div class=a style="left:111px;top:579px;width:11px;height:11px;border:1px solid #8e8f8f;background:linear-gradient(135deg,#dcdcdc,#fafafa)"></div><svg class=a style="left:111px;top:579px" width="13" height="13"><path d="M3,6.5 L5.5,10 L10,2.5" stroke="#4a5f97" stroke-width="1.8" fill="none"/></svg><div class=t style="left:127.0px;top:579.7px;font-size:11px;color:#000;transform:scaleY(1.08);transform-origin:0 9.31px;">Автоматически определять катет шва в зависимости от толщин деталей</div><div class=a style="left:111px;top:597px;width:10px;height:10px;border-radius:50%;border:1px solid #9a9a9a;background:radial-gradient(circle at 50% 70%,#fafafa,#d8d8d8 70%,#c8c8c8)"></div><div class=t style="left:130.0px;top:597.7px;font-size:11px;color:#000;transform:scaleY(1.08);transform-origin:0 9.31px;">По максимальной толщине детали СП 16.1.3330</div><div class=a style="left:391px;top:597px;width:10px;height:10px;border-radius:50%;border:1px solid #9a9a9a;background:radial-gradient(circle at 50% 70%,#fafafa,#d8d8d8 70%,#c8c8c8)"></div><div class=a style="left:393px;top:599px;width:6px;height:6px;border-radius:50%;border:1px solid #173a5c;background:radial-gradient(circle at 45% 35%,#b8f0ff,#2aa0e0 50%,#1060a8)"></div><div class=t style="left:410.0px;top:597.7px;font-size:11px;color:#000;transform:scaleY(1.08);transform-origin:0 9.31px;">По минимальной толщине детали</div><div class=t style="left:113.0px;top:614.2px;font-size:11px;color:#000;transform:scaleY(1.08);transform-origin:0 9.31px;">t=</div><div class=t style="left:135.0px;top:614.2px;font-size:11px;color:#000;transform:scaleY(1.08);transform-origin:0 9.31px;">Авто</div><div class=t style="left:112.0px;top:627.7px;font-size:11px;color:#000;transform:scaleY(1.08);transform-origin:0 9.31px;">мм</div><div class=t style="left:134.0px;top:627.7px;font-size:11px;color:#000;transform:scaleY(1.08);transform-origin:0 9.31px;">катет</div><div class=t style="left:113.0px;top:645.9px;font-size:11.5px;color:#000;transform:scaleY(1.08);transform-origin:0 9.73px;">1</div><div class=a style="left:129px;top:642px;width:31px;height:18px;border:1px solid #a8a8a8;background:#fff"></div><div class=t style="left:132.0px;top:645.9px;font-size:11.5px;color:#000;transform:scaleY(1.08);transform-origin:0 9.73px;">1</div><svg class=a style="left:146px;top:644px" width="14" height="16"><rect x="0.5" y="0.5" width="13" height="7" fill="#ececec" stroke="#a8a8a8"/><rect x="0.5" y="8.5" width="13" height="7" fill="#ececec" stroke="#a8a8a8"/><path d="M4,5.5 L7,2.5 L10,5.5Z M4,10.5 L7,13.5 L10,10.5Z" fill="#5a6aa8"/></svg><div class=t style="left:113.0px;top:669.9px;font-size:11.5px;color:#000;transform:scaleY(1.08);transform-origin:0 9.73px;">2</div><div class=a style="left:129px;top:666px;width:31px;height:18px;border:1px solid #a8a8a8;background:#fff"></div><div class=t style="left:132.0px;top:669.9px;font-size:11.5px;color:#000;transform:scaleY(1.08);transform-origin:0 9.73px;">2</div><svg class=a style="left:146px;top:668px" width="14" height="16"><rect x="0.5" y="0.5" width="13" height="7" fill="#ececec" stroke="#a8a8a8"/><rect x="0.5" y="8.5" width="13" height="7" fill="#ececec" stroke="#a8a8a8"/><path d="M4,5.5 L7,2.5 L10,5.5Z M4,10.5 L7,13.5 L10,10.5Z" fill="#5a6aa8"/></svg><div class=t style="left:113.0px;top:693.9px;font-size:11.5px;color:#000;transform:scaleY(1.08);transform-origin:0 9.73px;">3</div><div class=a style="left:129px;top:690px;width:31px;height:18px;border:1px solid #a8a8a8;background:#fff"></div><div class=t style="left:132.0px;top:693.9px;font-size:11.5px;color:#000;transform:scaleY(1.08);transform-origin:0 9.73px;">3</div><svg class=a style="left:146px;top:692px" width="14" height="16"><rect x="0.5" y="0.5" width="13" height="7" fill="#ececec" stroke="#a8a8a8"/><rect x="0.5" y="8.5" width="13" height="7" fill="#ececec" stroke="#a8a8a8"/><path d="M4,5.5 L7,2.5 L10,5.5Z M4,10.5 L7,13.5 L10,10.5Z" fill="#5a6aa8"/></svg><div class=t style="left:113.0px;top:717.9px;font-size:11.5px;color:#000;transform:scaleY(1.08);transform-origin:0 9.73px;">4</div><div class=a style="left:129px;top:714px;width:31px;height:18px;border:1px solid #a8a8a8;background:#fff"></div><div class=t style="left:132.0px;top:717.9px;font-size:11.5px;color:#000;transform:scaleY(1.08);transform-origin:0 9.73px;">3</div><svg class=a style="left:146px;top:716px" width="14" height="16"><rect x="0.5" y="0.5" width="13" height="7" fill="#ececec" stroke="#a8a8a8"/><rect x="0.5" y="8.5" width="13" height="7" fill="#ececec" stroke="#a8a8a8"/><path d="M4,5.5 L7,2.5 L10,5.5Z M4,10.5 L7,13.5 L10,10.5Z" fill="#5a6aa8"/></svg><div class=t style="left:113.0px;top:741.9px;font-size:11.5px;color:#000;transform:scaleY(1.08);transform-origin:0 9.73px;">5</div><div class=a style="left:129px;top:738px;width:31px;height:18px;border:1px solid #a8a8a8;background:#fff"></div><div class=t style="left:132.0px;top:741.9px;font-size:11.5px;color:#000;transform:scaleY(1.08);transform-origin:0 9.73px;">3</div><svg class=a style="left:146px;top:740px" width="14" height="16"><rect x="0.5" y="0.5" width="13" height="7" fill="#ececec" stroke="#a8a8a8"/><rect x="0.5" y="8.5" width="13" height="7" fill="#ececec" stroke="#a8a8a8"/><path d="M4,5.5 L7,2.5 L10,5.5Z M4,10.5 L7,13.5 L10,10.5Z" fill="#5a6aa8"/></svg><div class=t style="left:113.0px;top:765.9px;font-size:11.5px;color:#000;transform:scaleY(1.08);transform-origin:0 9.73px;">6</div><div class=a style="left:129px;top:762px;width:31px;height:18px;border:1px solid #a8a8a8;background:#fff"></div><div class=t style="left:132.0px;top:765.9px;font-size:11.5px;color:#000;transform:scaleY(1.08);transform-origin:0 9.73px;">4</div><svg class=a style="left:146px;top:764px" width="14" height="16"><rect x="0.5" y="0.5" width="13" height="7" fill="#ececec" stroke="#a8a8a8"/><rect x="0.5" y="8.5" width="13" height="7" fill="#ececec" stroke="#a8a8a8"/><path d="M4,5.5 L7,2.5 L10,5.5Z M4,10.5 L7,13.5 L10,10.5Z" fill="#5a6aa8"/></svg><div class=t style="left:113.0px;top:789.9px;font-size:11.5px;color:#000;transform:scaleY(1.08);transform-origin:0 9.73px;">7</div><div class=a style="left:129px;top:786px;width:31px;height:18px;border:1px solid #a8a8a8;background:#fff"></div><div class=t style="left:132.0px;top:789.9px;font-size:11.5px;color:#000;transform:scaleY(1.08);transform-origin:0 9.73px;">4</div><svg class=a style="left:146px;top:788px" width="14" height="16"><rect x="0.5" y="0.5" width="13" height="7" fill="#ececec" stroke="#a8a8a8"/><rect x="0.5" y="8.5" width="13" height="7" fill="#ececec" stroke="#a8a8a8"/><path d="M4,5.5 L7,2.5 L10,5.5Z M4,10.5 L7,13.5 L10,10.5Z" fill="#5a6aa8"/></svg><div class=t style="left:113.0px;top:813.9px;font-size:11.5px;color:#000;transform:scaleY(1.08);transform-origin:0 9.73px;">8</div><div class=a style="left:129px;top:810px;width:31px;height:18px;border:1px solid #a8a8a8;background:#fff"></div><div class=t style="left:132.0px;top:813.9px;font-size:11.5px;color:#000;transform:scaleY(1.08);transform-origin:0 9.73px;">4</div><svg class=a style="left:146px;top:812px" width="14" height="16"><rect x="0.5" y="0.5" width="13" height="7" fill="#ececec" stroke="#a8a8a8"/><rect x="0.5" y="8.5" width="13" height="7" fill="#ececec" stroke="#a8a8a8"/><path d="M4,5.5 L7,2.5 L10,5.5Z M4,10.5 L7,13.5 L10,10.5Z" fill="#5a6aa8"/></svg><div class=t style="left:176.0px;top:614.2px;font-size:11px;color:#000;transform:scaleY(1.08);transform-origin:0 9.31px;">t=</div><div class=t style="left:198.0px;top:614.2px;font-size:11px;color:#000;transform:scaleY(1.08);transform-origin:0 9.31px;">Авто</div><div class=t style="left:175.0px;top:627.7px;font-size:11px;color:#000;transform:scaleY(1.08);transform-origin:0 9.31px;">мм</div><div class=t style="left:197.0px;top:627.7px;font-size:11px;color:#000;transform:scaleY(1.08);transform-origin:0 9.31px;">катет</div><div class=t style="left:176.0px;top:645.9px;font-size:11.5px;color:#000;transform:scaleY(1.08);transform-origin:0 9.73px;">9</div><div class=a style="left:192px;top:642px;width:31px;height:18px;border:1px solid #a8a8a8;background:#fff"></div><div class=t style="left:195.0px;top:645.9px;font-size:11.5px;color:#000;transform:scaleY(1.08);transform-origin:0 9.73px;">5</div><svg class=a style="left:209px;top:644px" width="14" height="16"><rect x="0.5" y="0.5" width="13" height="7" fill="#ececec" stroke="#a8a8a8"/><rect x="0.5" y="8.5" width="13" height="7" fill="#ececec" stroke="#a8a8a8"/><path d="M4,5.5 L7,2.5 L10,5.5Z M4,10.5 L7,13.5 L10,10.5Z" fill="#5a6aa8"/></svg><div class=t style="left:176.0px;top:669.9px;font-size:11.5px;color:#000;transform:scaleY(1.08);transform-origin:0 9.73px;">10</div><div class=a style="left:192px;top:666px;width:31px;height:18px;border:1px solid #a8a8a8;background:#fff"></div><div class=t style="left:195.0px;top:669.9px;font-size:11.5px;color:#000;transform:scaleY(1.08);transform-origin:0 9.73px;">5</div><svg class=a style="left:209px;top:668px" width="14" height="16"><rect x="0.5" y="0.5" width="13" height="7" fill="#ececec" stroke="#a8a8a8"/><rect x="0.5" y="8.5" width="13" height="7" fill="#ececec" stroke="#a8a8a8"/><path d="M4,5.5 L7,2.5 L10,5.5Z M4,10.5 L7,13.5 L10,10.5Z" fill="#5a6aa8"/></svg><div class=t style="left:176.0px;top:693.9px;font-size:11.5px;color:#000;transform:scaleY(1.08);transform-origin:0 9.73px;">11</div><div class=a style="left:192px;top:690px;width:31px;height:18px;border:1px solid #a8a8a8;background:#fff"></div><div class=t style="left:195.0px;top:693.9px;font-size:11.5px;color:#000;transform:scaleY(1.08);transform-origin:0 9.73px;">6</div><svg class=a style="left:209px;top:692px" width="14" height="16"><rect x="0.5" y="0.5" width="13" height="7" fill="#ececec" stroke="#a8a8a8"/><rect x="0.5" y="8.5" width="13" height="7" fill="#ececec" stroke="#a8a8a8"/><path d="M4,5.5 L7,2.5 L10,5.5Z M4,10.5 L7,13.5 L10,10.5Z" fill="#5a6aa8"/></svg><div class=t style="left:176.0px;top:717.9px;font-size:11.5px;color:#000;transform:scaleY(1.08);transform-origin:0 9.73px;">12</div><div class=a style="left:192px;top:714px;width:31px;height:18px;border:1px solid #a8a8a8;background:#fff"></div><div class=t style="left:195.0px;top:717.9px;font-size:11.5px;color:#000;transform:scaleY(1.08);transform-origin:0 9.73px;">6</div><svg class=a style="left:209px;top:716px" width="14" height="16"><rect x="0.5" y="0.5" width="13" height="7" fill="#ececec" stroke="#a8a8a8"/><rect x="0.5" y="8.5" width="13" height="7" fill="#ececec" stroke="#a8a8a8"/><path d="M4,5.5 L7,2.5 L10,5.5Z M4,10.5 L7,13.5 L10,10.5Z" fill="#5a6aa8"/></svg><div class=t style="left:176.0px;top:741.9px;font-size:11.5px;color:#000;transform:scaleY(1.08);transform-origin:0 9.73px;">13</div><div class=a style="left:192px;top:738px;width:31px;height:18px;border:1px solid #a8a8a8;background:#fff"></div><div class=t style="left:195.0px;top:741.9px;font-size:11.5px;color:#000;transform:scaleY(1.08);transform-origin:0 9.73px;">7</div><svg class=a style="left:209px;top:740px" width="14" height="16"><rect x="0.5" y="0.5" width="13" height="7" fill="#ececec" stroke="#a8a8a8"/><rect x="0.5" y="8.5" width="13" height="7" fill="#ececec" stroke="#a8a8a8"/><path d="M4,5.5 L7,2.5 L10,5.5Z M4,10.5 L7,13.5 L10,10.5Z" fill="#5a6aa8"/></svg><div class=t style="left:176.0px;top:765.9px;font-size:11.5px;color:#000;transform:scaleY(1.08);transform-origin:0 9.73px;">14</div><div class=a style="left:192px;top:762px;width:31px;height:18px;border:1px solid #a8a8a8;background:#fff"></div><div class=t style="left:195.0px;top:765.9px;font-size:11.5px;color:#000;transform:scaleY(1.08);transform-origin:0 9.73px;">7</div><svg class=a style="left:209px;top:764px" width="14" height="16"><rect x="0.5" y="0.5" width="13" height="7" fill="#ececec" stroke="#a8a8a8"/><rect x="0.5" y="8.5" width="13" height="7" fill="#ececec" stroke="#a8a8a8"/><path d="M4,5.5 L7,2.5 L10,5.5Z M4,10.5 L7,13.5 L10,10.5Z" fill="#5a6aa8"/></svg><div class=t style="left:176.0px;top:789.9px;font-size:11.5px;color:#000;transform:scaleY(1.08);transform-origin:0 9.73px;">15</div><div class=a style="left:192px;top:786px;width:31px;height:18px;border:1px solid #a8a8a8;background:#fff"></div><div class=t style="left:195.0px;top:789.9px;font-size:11.5px;color:#000;transform:scaleY(1.08);transform-origin:0 9.73px;">8</div><svg class=a style="left:209px;top:788px" width="14" height="16"><rect x="0.5" y="0.5" width="13" height="7" fill="#ececec" stroke="#a8a8a8"/><rect x="0.5" y="8.5" width="13" height="7" fill="#ececec" stroke="#a8a8a8"/><path d="M4,5.5 L7,2.5 L10,5.5Z M4,10.5 L7,13.5 L10,10.5Z" fill="#5a6aa8"/></svg><div class=t style="left:176.0px;top:813.9px;font-size:11.5px;color:#000;transform:scaleY(1.08);transform-origin:0 9.73px;">16</div><div class=a style="left:192px;top:810px;width:31px;height:18px;border:1px solid #a8a8a8;background:#fff"></div><div class=t style="left:195.0px;top:813.9px;font-size:11.5px;color:#000;transform:scaleY(1.08);transform-origin:0 9.73px;">10</div><svg class=a style="left:209px;top:812px" width="14" height="16"><rect x="0.5" y="0.5" width="13" height="7" fill="#ececec" stroke="#a8a8a8"/><rect x="0.5" y="8.5" width="13" height="7" fill="#ececec" stroke="#a8a8a8"/><path d="M4,5.5 L7,2.5 L10,5.5Z M4,10.5 L7,13.5 L10,10.5Z" fill="#5a6aa8"/></svg><div class=t style="left:239.0px;top:614.2px;font-size:11px;color:#000;transform:scaleY(1.08);transform-origin:0 9.31px;">t=</div><div class=t style="left:261.0px;top:614.2px;font-size:11px;color:#000;transform:scaleY(1.08);transform-origin:0 9.31px;">Авто</div><div class=t style="left:238.0px;top:627.7px;font-size:11px;color:#000;transform:scaleY(1.08);transform-origin:0 9.31px;">мм</div><div class=t style="left:260.0px;top:627.7px;font-size:11px;color:#000;transform:scaleY(1.08);transform-origin:0 9.31px;">катет</div><div class=t style="left:239.0px;top:645.9px;font-size:11.5px;color:#000;transform:scaleY(1.08);transform-origin:0 9.73px;">17</div><div class=a style="left:255px;top:642px;width:31px;height:18px;border:1px solid #a8a8a8;background:#fff"></div><div class=t style="left:258.0px;top:645.9px;font-size:11.5px;color:#000;transform:scaleY(1.08);transform-origin:0 9.73px;">10</div><svg class=a style="left:272px;top:644px" width="14" height="16"><rect x="0.5" y="0.5" width="13" height="7" fill="#ececec" stroke="#a8a8a8"/><rect x="0.5" y="8.5" width="13" height="7" fill="#ececec" stroke="#a8a8a8"/><path d="M4,5.5 L7,2.5 L10,5.5Z M4,10.5 L7,13.5 L10,10.5Z" fill="#5a6aa8"/></svg><div class=t style="left:239.0px;top:669.9px;font-size:11.5px;color:#000;transform:scaleY(1.08);transform-origin:0 9.73px;">18</div><div class=a style="left:255px;top:666px;width:31px;height:18px;border:1px solid #a8a8a8;background:#fff"></div><div class=t style="left:258.0px;top:669.9px;font-size:11.5px;color:#000;transform:scaleY(1.08);transform-origin:0 9.73px;">12</div><svg class=a style="left:272px;top:668px" width="14" height="16"><rect x="0.5" y="0.5" width="13" height="7" fill="#ececec" stroke="#a8a8a8"/><rect x="0.5" y="8.5" width="13" height="7" fill="#ececec" stroke="#a8a8a8"/><path d="M4,5.5 L7,2.5 L10,5.5Z M4,10.5 L7,13.5 L10,10.5Z" fill="#5a6aa8"/></svg><div class=t style="left:239.0px;top:693.9px;font-size:11.5px;color:#000;transform:scaleY(1.08);transform-origin:0 9.73px;">19</div><div class=a style="left:255px;top:690px;width:31px;height:18px;border:1px solid #a8a8a8;background:#fff"></div><div class=t style="left:258.0px;top:693.9px;font-size:11.5px;color:#000;transform:scaleY(1.08);transform-origin:0 9.73px;">12</div><svg class=a style="left:272px;top:692px" width="14" height="16"><rect x="0.5" y="0.5" width="13" height="7" fill="#ececec" stroke="#a8a8a8"/><rect x="0.5" y="8.5" width="13" height="7" fill="#ececec" stroke="#a8a8a8"/><path d="M4,5.5 L7,2.5 L10,5.5Z M4,10.5 L7,13.5 L10,10.5Z" fill="#5a6aa8"/></svg><div class=t style="left:239.0px;top:717.9px;font-size:11.5px;color:#000;transform:scaleY(1.08);transform-origin:0 9.73px;">20</div><div class=a style="left:255px;top:714px;width:31px;height:18px;border:1px solid #a8a8a8;background:#fff"></div><div class=t style="left:258.0px;top:717.9px;font-size:11.5px;color:#000;transform:scaleY(1.08);transform-origin:0 9.73px;">15</div><svg class=a style="left:272px;top:716px" width="14" height="16"><rect x="0.5" y="0.5" width="13" height="7" fill="#ececec" stroke="#a8a8a8"/><rect x="0.5" y="8.5" width="13" height="7" fill="#ececec" stroke="#a8a8a8"/><path d="M4,5.5 L7,2.5 L10,5.5Z M4,10.5 L7,13.5 L10,10.5Z" fill="#5a6aa8"/></svg><div class=t style="left:239.0px;top:741.9px;font-size:11.5px;color:#000;transform:scaleY(1.08);transform-origin:0 9.73px;">21</div><div class=a style="left:255px;top:738px;width:31px;height:18px;border:1px solid #a8a8a8;background:#fff"></div><div class=t style="left:258.0px;top:741.9px;font-size:11.5px;color:#000;transform:scaleY(1.08);transform-origin:0 9.73px;">15</div><svg class=a style="left:272px;top:740px" width="14" height="16"><rect x="0.5" y="0.5" width="13" height="7" fill="#ececec" stroke="#a8a8a8"/><rect x="0.5" y="8.5" width="13" height="7" fill="#ececec" stroke="#a8a8a8"/><path d="M4,5.5 L7,2.5 L10,5.5Z M4,10.5 L7,13.5 L10,10.5Z" fill="#5a6aa8"/></svg><div class=t style="left:239.0px;top:765.9px;font-size:11.5px;color:#000;transform:scaleY(1.08);transform-origin:0 9.73px;">22</div><div class=a style="left:255px;top:762px;width:31px;height:18px;border:1px solid #a8a8a8;background:#fff"></div><div class=t style="left:258.0px;top:765.9px;font-size:11.5px;color:#000;transform:scaleY(1.08);transform-origin:0 9.73px;">15</div><svg class=a style="left:272px;top:764px" width="14" height="16"><rect x="0.5" y="0.5" width="13" height="7" fill="#ececec" stroke="#a8a8a8"/><rect x="0.5" y="8.5" width="13" height="7" fill="#ececec" stroke="#a8a8a8"/><path d="M4,5.5 L7,2.5 L10,5.5Z M4,10.5 L7,13.5 L10,10.5Z" fill="#5a6aa8"/></svg><div class=t style="left:239.0px;top:789.9px;font-size:11.5px;color:#000;transform:scaleY(1.08);transform-origin:0 9.73px;">23</div><div class=a style="left:255px;top:786px;width:31px;height:18px;border:1px solid #a8a8a8;background:#fff"></div><div class=t style="left:258.0px;top:789.9px;font-size:11.5px;color:#000;transform:scaleY(1.08);transform-origin:0 9.73px;">15</div><svg class=a style="left:272px;top:788px" width="14" height="16"><rect x="0.5" y="0.5" width="13" height="7" fill="#ececec" stroke="#a8a8a8"/><rect x="0.5" y="8.5" width="13" height="7" fill="#ececec" stroke="#a8a8a8"/><path d="M4,5.5 L7,2.5 L10,5.5Z M4,10.5 L7,13.5 L10,10.5Z" fill="#5a6aa8"/></svg><div class=t style="left:239.0px;top:813.9px;font-size:11.5px;color:#000;transform:scaleY(1.08);transform-origin:0 9.73px;">24</div><div class=a style="left:255px;top:810px;width:31px;height:18px;border:1px solid #a8a8a8;background:#fff"></div><div class=t style="left:258.0px;top:813.9px;font-size:11.5px;color:#000;transform:scaleY(1.08);transform-origin:0 9.73px;">15</div><svg class=a style="left:272px;top:812px" width="14" height="16"><rect x="0.5" y="0.5" width="13" height="7" fill="#ececec" stroke="#a8a8a8"/><rect x="0.5" y="8.5" width="13" height="7" fill="#ececec" stroke="#a8a8a8"/><path d="M4,5.5 L7,2.5 L10,5.5Z M4,10.5 L7,13.5 L10,10.5Z" fill="#5a6aa8"/></svg><div class=t style="left:302.0px;top:614.2px;font-size:11px;color:#000;transform:scaleY(1.08);transform-origin:0 9.31px;">t=</div><div class=t style="left:324.0px;top:614.2px;font-size:11px;color:#000;transform:scaleY(1.08);transform-origin:0 9.31px;">Авто</div><div class=t style="left:301.0px;top:627.7px;font-size:11px;color:#000;transform:scaleY(1.08);transform-origin:0 9.31px;">мм</div><div class=t style="left:323.0px;top:627.7px;font-size:11px;color:#000;transform:scaleY(1.08);transform-origin:0 9.31px;">катет</div><div class=t style="left:302.0px;top:645.9px;font-size:11.5px;color:#000;transform:scaleY(1.08);transform-origin:0 9.73px;">25</div><div class=a style="left:318px;top:642px;width:31px;height:18px;border:1px solid #a8a8a8;background:#fff"></div><div class=t style="left:321.0px;top:645.9px;font-size:11.5px;color:#000;transform:scaleY(1.08);transform-origin:0 9.73px;">18</div><svg class=a style="left:335px;top:644px" width="14" height="16"><rect x="0.5" y="0.5" width="13" height="7" fill="#ececec" stroke="#a8a8a8"/><rect x="0.5" y="8.5" width="13" height="7" fill="#ececec" stroke="#a8a8a8"/><path d="M4,5.5 L7,2.5 L10,5.5Z M4,10.5 L7,13.5 L10,10.5Z" fill="#5a6aa8"/></svg><div class=t style="left:302.0px;top:669.9px;font-size:11.5px;color:#000;transform:scaleY(1.08);transform-origin:0 9.73px;">26</div><div class=a style="left:318px;top:666px;width:31px;height:18px;border:1px solid #a8a8a8;background:#fff"></div><div class=t style="left:321.0px;top:669.9px;font-size:11.5px;color:#000;transform:scaleY(1.08);transform-origin:0 9.73px;">18</div><svg class=a style="left:335px;top:668px" width="14" height="16"><rect x="0.5" y="0.5" width="13" height="7" fill="#ececec" stroke="#a8a8a8"/><rect x="0.5" y="8.5" width="13" height="7" fill="#ececec" stroke="#a8a8a8"/><path d="M4,5.5 L7,2.5 L10,5.5Z M4,10.5 L7,13.5 L10,10.5Z" fill="#5a6aa8"/></svg><div class=t style="left:302.0px;top:693.9px;font-size:11.5px;color:#000;transform:scaleY(1.08);transform-origin:0 9.73px;">27</div><div class=a style="left:318px;top:690px;width:31px;height:18px;border:1px solid #a8a8a8;background:#fff"></div><div class=t style="left:321.0px;top:693.9px;font-size:11.5px;color:#000;transform:scaleY(1.08);transform-origin:0 9.73px;">18</div><svg class=a style="left:335px;top:692px" width="14" height="16"><rect x="0.5" y="0.5" width="13" height="7" fill="#ececec" stroke="#a8a8a8"/><rect x="0.5" y="8.5" width="13" height="7" fill="#ececec" stroke="#a8a8a8"/><path d="M4,5.5 L7,2.5 L10,5.5Z M4,10.5 L7,13.5 L10,10.5Z" fill="#5a6aa8"/></svg><div class=t style="left:302.0px;top:717.9px;font-size:11.5px;color:#000;transform:scaleY(1.08);transform-origin:0 9.73px;">28</div><div class=a style="left:318px;top:714px;width:31px;height:18px;border:1px solid #a8a8a8;background:#fff"></div><div class=t style="left:321.0px;top:717.9px;font-size:11.5px;color:#000;transform:scaleY(1.08);transform-origin:0 9.73px;">18</div><svg class=a style="left:335px;top:716px" width="14" height="16"><rect x="0.5" y="0.5" width="13" height="7" fill="#ececec" stroke="#a8a8a8"/><rect x="0.5" y="8.5" width="13" height="7" fill="#ececec" stroke="#a8a8a8"/><path d="M4,5.5 L7,2.5 L10,5.5Z M4,10.5 L7,13.5 L10,10.5Z" fill="#5a6aa8"/></svg><div class=t style="left:302.0px;top:741.9px;font-size:11.5px;color:#000;transform:scaleY(1.08);transform-origin:0 9.73px;">29</div><div class=a style="left:318px;top:738px;width:31px;height:18px;border:1px solid #a8a8a8;background:#fff"></div><div class=t style="left:321.0px;top:741.9px;font-size:11.5px;color:#000;transform:scaleY(1.08);transform-origin:0 9.73px;">18</div><svg class=a style="left:335px;top:740px" width="14" height="16"><rect x="0.5" y="0.5" width="13" height="7" fill="#ececec" stroke="#a8a8a8"/><rect x="0.5" y="8.5" width="13" height="7" fill="#ececec" stroke="#a8a8a8"/><path d="M4,5.5 L7,2.5 L10,5.5Z M4,10.5 L7,13.5 L10,10.5Z" fill="#5a6aa8"/></svg><div class=t style="left:302.0px;top:765.9px;font-size:11.5px;color:#000;transform:scaleY(1.08);transform-origin:0 9.73px;">30</div><div class=a style="left:318px;top:762px;width:31px;height:18px;border:1px solid #a8a8a8;background:#fff"></div><div class=t style="left:321.0px;top:765.9px;font-size:11.5px;color:#000;transform:scaleY(1.08);transform-origin:0 9.73px;">20</div><svg class=a style="left:335px;top:764px" width="14" height="16"><rect x="0.5" y="0.5" width="13" height="7" fill="#ececec" stroke="#a8a8a8"/><rect x="0.5" y="8.5" width="13" height="7" fill="#ececec" stroke="#a8a8a8"/><path d="M4,5.5 L7,2.5 L10,5.5Z M4,10.5 L7,13.5 L10,10.5Z" fill="#5a6aa8"/></svg><div class=t style="left:302.0px;top:789.9px;font-size:11.5px;color:#000;transform:scaleY(1.08);transform-origin:0 9.73px;">31</div><div class=a style="left:318px;top:786px;width:31px;height:18px;border:1px solid #a8a8a8;background:#fff"></div><div class=t style="left:321.0px;top:789.9px;font-size:11.5px;color:#000;transform:scaleY(1.08);transform-origin:0 9.73px;">20</div><svg class=a style="left:335px;top:788px" width="14" height="16"><rect x="0.5" y="0.5" width="13" height="7" fill="#ececec" stroke="#a8a8a8"/><rect x="0.5" y="8.5" width="13" height="7" fill="#ececec" stroke="#a8a8a8"/><path d="M4,5.5 L7,2.5 L10,5.5Z M4,10.5 L7,13.5 L10,10.5Z" fill="#5a6aa8"/></svg><div class=t style="left:302.0px;top:813.9px;font-size:11.5px;color:#000;transform:scaleY(1.08);transform-origin:0 9.73px;">32</div><div class=a style="left:318px;top:810px;width:31px;height:18px;border:1px solid #a8a8a8;background:#fff"></div><div class=t style="left:321.0px;top:813.9px;font-size:11.5px;color:#000;transform:scaleY(1.08);transform-origin:0 9.73px;">20</div><svg class=a style="left:335px;top:812px" width="14" height="16"><rect x="0.5" y="0.5" width="13" height="7" fill="#ececec" stroke="#a8a8a8"/><rect x="0.5" y="8.5" width="13" height="7" fill="#ececec" stroke="#a8a8a8"/><path d="M4,5.5 L7,2.5 L10,5.5Z M4,10.5 L7,13.5 L10,10.5Z" fill="#5a6aa8"/></svg><div class=t style="left:365.0px;top:614.2px;font-size:11px;color:#000;transform:scaleY(1.08);transform-origin:0 9.31px;">t=</div><div class=t style="left:387.0px;top:614.2px;font-size:11px;color:#000;transform:scaleY(1.08);transform-origin:0 9.31px;">Авто</div><div class=t style="left:364.0px;top:627.7px;font-size:11px;color:#000;transform:scaleY(1.08);transform-origin:0 9.31px;">мм</div><div class=t style="left:386.0px;top:627.7px;font-size:11px;color:#000;transform:scaleY(1.08);transform-origin:0 9.31px;">катет</div><div class=t style="left:365.0px;top:645.9px;font-size:11.5px;color:#000;transform:scaleY(1.08);transform-origin:0 9.73px;">33</div><div class=a style="left:381px;top:642px;width:31px;height:18px;border:1px solid #a8a8a8;background:#fff"></div><div class=t style="left:384.0px;top:645.9px;font-size:11.5px;color:#000;transform:scaleY(1.08);transform-origin:0 9.73px;">20</div><svg class=a style="left:398px;top:644px" width="14" height="16"><rect x="0.5" y="0.5" width="13" height="7" fill="#ececec" stroke="#a8a8a8"/><rect x="0.5" y="8.5" width="13" height="7" fill="#ececec" stroke="#a8a8a8"/><path d="M4,5.5 L7,2.5 L10,5.5Z M4,10.5 L7,13.5 L10,10.5Z" fill="#5a6aa8"/></svg><div class=t style="left:365.0px;top:669.9px;font-size:11.5px;color:#000;transform:scaleY(1.08);transform-origin:0 9.73px;">34</div><div class=a style="left:381px;top:666px;width:31px;height:18px;border:1px solid #a8a8a8;background:#fff"></div><div class=t style="left:384.0px;top:669.9px;font-size:11.5px;color:#000;transform:scaleY(1.08);transform-origin:0 9.73px;">25</div><svg class=a style="left:398px;top:668px" width="14" height="16"><rect x="0.5" y="0.5" width="13" height="7" fill="#ececec" stroke="#a8a8a8"/><rect x="0.5" y="8.5" width="13" height="7" fill="#ececec" stroke="#a8a8a8"/><path d="M4,5.5 L7,2.5 L10,5.5Z M4,10.5 L7,13.5 L10,10.5Z" fill="#5a6aa8"/></svg><div class=t style="left:365.0px;top:693.9px;font-size:11.5px;color:#000;transform:scaleY(1.08);transform-origin:0 9.73px;">35</div><div class=a style="left:381px;top:690px;width:31px;height:18px;border:1px solid #a8a8a8;background:#fff"></div><div class=t style="left:384.0px;top:693.9px;font-size:11.5px;color:#000;transform:scaleY(1.08);transform-origin:0 9.73px;">25</div><svg class=a style="left:398px;top:692px" width="14" height="16"><rect x="0.5" y="0.5" width="13" height="7" fill="#ececec" stroke="#a8a8a8"/><rect x="0.5" y="8.5" width="13" height="7" fill="#ececec" stroke="#a8a8a8"/><path d="M4,5.5 L7,2.5 L10,5.5Z M4,10.5 L7,13.5 L10,10.5Z" fill="#5a6aa8"/></svg><div class=t style="left:365.0px;top:717.9px;font-size:11.5px;color:#000;transform:scaleY(1.08);transform-origin:0 9.73px;">36</div><div class=a style="left:381px;top:714px;width:31px;height:18px;border:1px solid #a8a8a8;background:#fff"></div><div class=t style="left:384.0px;top:717.9px;font-size:11.5px;color:#000;transform:scaleY(1.08);transform-origin:0 9.73px;">25</div><svg class=a style="left:398px;top:716px" width="14" height="16"><rect x="0.5" y="0.5" width="13" height="7" fill="#ececec" stroke="#a8a8a8"/><rect x="0.5" y="8.5" width="13" height="7" fill="#ececec" stroke="#a8a8a8"/><path d="M4,5.5 L7,2.5 L10,5.5Z M4,10.5 L7,13.5 L10,10.5Z" fill="#5a6aa8"/></svg><div class=t style="left:365.0px;top:741.9px;font-size:11.5px;color:#000;transform:scaleY(1.08);transform-origin:0 9.73px;">37</div><div class=a style="left:381px;top:738px;width:31px;height:18px;border:1px solid #a8a8a8;background:#fff"></div><div class=t style="left:384.0px;top:741.9px;font-size:11.5px;color:#000;transform:scaleY(1.08);transform-origin:0 9.73px;">25</div><svg class=a style="left:398px;top:740px" width="14" height="16"><rect x="0.5" y="0.5" width="13" height="7" fill="#ececec" stroke="#a8a8a8"/><rect x="0.5" y="8.5" width="13" height="7" fill="#ececec" stroke="#a8a8a8"/><path d="M4,5.5 L7,2.5 L10,5.5Z M4,10.5 L7,13.5 L10,10.5Z" fill="#5a6aa8"/></svg><div class=t style="left:365.0px;top:765.9px;font-size:11.5px;color:#000;transform:scaleY(1.08);transform-origin:0 9.73px;">38</div><div class=a style="left:381px;top:762px;width:31px;height:18px;border:1px solid #a8a8a8;background:#fff"></div><div class=t style="left:384.0px;top:765.9px;font-size:11.5px;color:#000;transform:scaleY(1.08);transform-origin:0 9.73px;">25</div><svg class=a style="left:398px;top:764px" width="14" height="16"><rect x="0.5" y="0.5" width="13" height="7" fill="#ececec" stroke="#a8a8a8"/><rect x="0.5" y="8.5" width="13" height="7" fill="#ececec" stroke="#a8a8a8"/><path d="M4,5.5 L7,2.5 L10,5.5Z M4,10.5 L7,13.5 L10,10.5Z" fill="#5a6aa8"/></svg><div class=t style="left:365.0px;top:789.9px;font-size:11.5px;color:#000;transform:scaleY(1.08);transform-origin:0 9.73px;">39</div><div class=a style="left:381px;top:786px;width:31px;height:18px;border:1px solid #a8a8a8;background:#fff"></div><div class=t style="left:384.0px;top:789.9px;font-size:11.5px;color:#000;transform:scaleY(1.08);transform-origin:0 9.73px;">30</div><svg class=a style="left:398px;top:788px" width="14" height="16"><rect x="0.5" y="0.5" width="13" height="7" fill="#ececec" stroke="#a8a8a8"/><rect x="0.5" y="8.5" width="13" height="7" fill="#ececec" stroke="#a8a8a8"/><path d="M4,5.5 L7,2.5 L10,5.5Z M4,10.5 L7,13.5 L10,10.5Z" fill="#5a6aa8"/></svg><div class=t style="left:365.0px;top:813.9px;font-size:11.5px;color:#000;transform:scaleY(1.08);transform-origin:0 9.73px;">40</div><div class=a style="left:381px;top:810px;width:31px;height:18px;border:1px solid #a8a8a8;background:#fff"></div><div class=t style="left:384.0px;top:813.9px;font-size:11.5px;color:#000;transform:scaleY(1.08);transform-origin:0 9.73px;">30</div><svg class=a style="left:398px;top:812px" width="14" height="16"><rect x="0.5" y="0.5" width="13" height="7" fill="#ececec" stroke="#a8a8a8"/><rect x="0.5" y="8.5" width="13" height="7" fill="#ececec" stroke="#a8a8a8"/><path d="M4,5.5 L7,2.5 L10,5.5Z M4,10.5 L7,13.5 L10,10.5Z" fill="#5a6aa8"/></svg><div class=a style="left:167.0px;top:611.0px;width:1.3px;height:217.0px;background:#000"></div><div class=a style="left:230.0px;top:611.0px;width:1.3px;height:217.0px;background:#000"></div><div class=a style="left:293.0px;top:611.0px;width:1.3px;height:217.0px;background:#000"></div><div class=a style="left:356.0px;top:611.0px;width:1.3px;height:217.0px;background:#000"></div><div class=a style="left:418.0px;top:611.0px;width:1.3px;height:217.0px;background:#000"></div><div class=t style="left:429.0px;top:614.2px;font-size:11px;color:#000;transform:scaleY(1.08);transform-origin:0 9.31px;">t=</div><div class=t style="left:461.0px;top:614.2px;font-size:11px;color:#000;transform:scaleY(1.08);transform-origin:0 9.31px;">Авто</div><div class=t style="left:429.0px;top:627.7px;font-size:11px;color:#000;transform:scaleY(1.08);transform-origin:0 9.31px;">мм</div><div class=t style="left:460.0px;top:627.7px;font-size:11px;color:#000;transform:scaleY(1.08);transform-origin:0 9.31px;">катет</div><div class=t style="left:426.0px;top:645.9px;font-size:11.5px;color:#000;transform:scaleY(1.08);transform-origin:0 9.73px;">41-45</div><div class=a style="left:462px;top:642px;width:31px;height:18px;border:1px solid #a8a8a8;background:#fff"></div><div class=t style="left:465.0px;top:645.9px;font-size:11.5px;color:#000;transform:scaleY(1.08);transform-origin:0 9.73px;">30</div><svg class=a style="left:479px;top:644px" width="14" height="16"><rect x="0.5" y="0.5" width="13" height="7" fill="#ececec" stroke="#a8a8a8"/><rect x="0.5" y="8.5" width="13" height="7" fill="#ececec" stroke="#a8a8a8"/><path d="M4,5.5 L7,2.5 L10,5.5Z M4,10.5 L7,13.5 L10,10.5Z" fill="#5a6aa8"/></svg><div class=t style="left:426.0px;top:669.9px;font-size:11.5px;color:#000;transform:scaleY(1.08);transform-origin:0 9.73px;">46-50</div><div class=a style="left:462px;top:666px;width:31px;height:18px;border:1px solid #a8a8a8;background:#fff"></div><div class=t style="left:465.0px;top:669.9px;font-size:11.5px;color:#000;transform:scaleY(1.08);transform-origin:0 9.73px;">40</div><svg class=a style="left:479px;top:668px" width="14" height="16"><rect x="0.5" y="0.5" width="13" height="7" fill="#ececec" stroke="#a8a8a8"/><rect x="0.5" y="8.5" width="13" height="7" fill="#ececec" stroke="#a8a8a8"/><path d="M4,5.5 L7,2.5 L10,5.5Z M4,10.5 L7,13.5 L10,10.5Z" fill="#5a6aa8"/></svg><div class=t style="left:426.0px;top:693.9px;font-size:11.5px;color:#000;transform:scaleY(1.08);transform-origin:0 9.73px;">51-60</div><div class=a style="left:462px;top:690px;width:31px;height:18px;border:1px solid #a8a8a8;background:#fff"></div><div class=t style="left:465.0px;top:693.9px;font-size:11.5px;color:#000;transform:scaleY(1.08);transform-origin:0 9.73px;">40</div><svg class=a style="left:479px;top:692px" width="14" height="16"><rect x="0.5" y="0.5" width="13" height="7" fill="#ececec" stroke="#a8a8a8"/><rect x="0.5" y="8.5" width="13" height="7" fill="#ececec" stroke="#a8a8a8"/><path d="M4,5.5 L7,2.5 L10,5.5Z M4,10.5 L7,13.5 L10,10.5Z" fill="#5a6aa8"/></svg><div class=t style="left:426.0px;top:717.9px;font-size:11.5px;color:#000;transform:scaleY(1.08);transform-origin:0 9.73px;">61-70</div><div class=a style="left:462px;top:714px;width:31px;height:18px;border:1px solid #a8a8a8;background:#fff"></div><div class=t style="left:465.0px;top:717.9px;font-size:11.5px;color:#000;transform:scaleY(1.08);transform-origin:0 9.73px;">50</div><svg class=a style="left:479px;top:716px" width="14" height="16"><rect x="0.5" y="0.5" width="13" height="7" fill="#ececec" stroke="#a8a8a8"/><rect x="0.5" y="8.5" width="13" height="7" fill="#ececec" stroke="#a8a8a8"/><path d="M4,5.5 L7,2.5 L10,5.5Z M4,10.5 L7,13.5 L10,10.5Z" fill="#5a6aa8"/></svg><div class=t style="left:434.0px;top:741.9px;font-size:11.5px;color:#000;transform:scaleY(1.08);transform-origin:0 9.73px;">&gt;70</div><div class=a style="left:462px;top:738px;width:31px;height:18px;border:1px solid #a8a8a8;background:#fff"></div><div class=t style="left:465.0px;top:741.9px;font-size:11.5px;color:#000;transform:scaleY(1.08);transform-origin:0 9.73px;">50</div><svg class=a style="left:479px;top:740px" width="14" height="16"><rect x="0.5" y="0.5" width="13" height="7" fill="#ececec" stroke="#a8a8a8"/><rect x="0.5" y="8.5" width="13" height="7" fill="#ececec" stroke="#a8a8a8"/><path d="M4,5.5 L7,2.5 L10,5.5Z M4,10.5 L7,13.5 L10,10.5Z" fill="#5a6aa8"/></svg><div class=a style="left:500px;top:619px;width:85px;height:138px;border:1px solid #d5dfe5;border-radius:3px"></div><div class=t style="left:505px;top:613.5px;font-size:11px;line-height:13px;background:#fff;padding:0 2px;color:#000"><span style="display:inline-block;transform:scaleY(1.08);transform-origin:0 10.3px">Применить к</span></div><div class=a style="left:505px;top:639.0px;width:11px;height:11px;border:1px solid #8e8f8f;background:linear-gradient(135deg,#dcdcdc,#fafafa)"></div><svg class=a style="left:505px;top:639.0px" width="13" height="13"><path d="M3,6.5 L5.5,10 L10,2.5" stroke="#4a5f97" stroke-width="1.8" fill="none"/></svg><svg class=a style="left:523px;top:638.5px" width="14" height="14"><rect x="1" y="5" width="11" height="3" fill="#000"/></svg><div class=a style="left:551px;top:639.0px;width:11px;height:11px;border:1px solid #8e8f8f;background:linear-gradient(135deg,#dcdcdc,#fafafa)"></div><svg class=a style="left:551px;top:639.0px" width="13" height="13"><path d="M3,6.5 L5.5,10 L10,2.5" stroke="#4a5f97" stroke-width="1.8" fill="none"/></svg><svg class=a style="left:568px;top:638.5px" width="14" height="14"><circle cx="6.5" cy="6.5" r="6" fill="#000"/></svg><div class=a style="left:505px;top:663.1px;width:11px;height:11px;border:1px solid #8e8f8f;background:linear-gradient(135deg,#dcdcdc,#fafafa)"></div><svg class=a style="left:505px;top:663.1px" width="13" height="13"><path d="M3,6.5 L5.5,10 L10,2.5" stroke="#4a5f97" stroke-width="1.8" fill="none"/></svg><svg class=a style="left:523px;top:662.6px" width="14" height="14"><path d="M2,1 L2,11 L12,11" stroke="#000" stroke-width="3" fill="none"/></svg><div class=a style="left:551px;top:663.1px;width:11px;height:11px;border:1px solid #8e8f8f;background:linear-gradient(135deg,#dcdcdc,#fafafa)"></div><svg class=a style="left:551px;top:663.1px" width="13" height="13"><path d="M3,6.5 L5.5,10 L10,2.5" stroke="#4a5f97" stroke-width="1.8" fill="none"/></svg><svg class=a style="left:568px;top:662.6px" width="14" height="14"><path d="M11,2 L2,2 L2,11 L11,11" stroke="#000" stroke-width="3" fill="none"/></svg><div class=a style="left:505px;top:687.2px;width:11px;height:11px;border:1px solid #8e8f8f;background:linear-gradient(135deg,#dcdcdc,#fafafa)"></div><svg class=a style="left:505px;top:687.2px" width="13" height="13"><path d="M3,6.5 L5.5,10 L10,2.5" stroke="#4a5f97" stroke-width="1.8" fill="none"/></svg><svg class=a style="left:523px;top:686.7px" width="14" height="14"><path d="M2,1.5 L11,1.5 M6.5,1 L6.5,11 M2,10.5 L11,10.5" stroke="#000" stroke-width="3" fill="none"/></svg><div class=a style="left:551px;top:687.2px;width:11px;height:11px;border:1px solid #8e8f8f;background:linear-gradient(135deg,#dcdcdc,#fafafa)"></div><svg class=a style="left:551px;top:687.2px" width="13" height="13"><path d="M3,6.5 L5.5,10 L10,2.5" stroke="#4a5f97" stroke-width="1.8" fill="none"/></svg><svg class=a style="left:568px;top:686.7px" width="14" height="14"><path d="M1,2 L12,2 M6.5,2 L6.5,12" stroke="#000" stroke-width="3" fill="none"/></svg><div class=a style="left:505px;top:711.3px;width:11px;height:11px;border:1px solid #8e8f8f;background:linear-gradient(135deg,#dcdcdc,#fafafa)"></div><svg class=a style="left:505px;top:711.3px" width="13" height="13"><path d="M3,6.5 L5.5,10 L10,2.5" stroke="#4a5f97" stroke-width="1.8" fill="none"/></svg><svg class=a style="left:523px;top:710.8px" width="14" height="14"><rect x="2" y="2" width="9" height="9" stroke="#000" stroke-width="3" fill="none"/></svg><div class=a style="left:551px;top:711.3px;width:11px;height:11px;border:1px solid #8e8f8f;background:linear-gradient(135deg,#dcdcdc,#fafafa)"></div><svg class=a style="left:551px;top:711.3px" width="13" height="13"><path d="M3,6.5 L5.5,10 L10,2.5" stroke="#4a5f97" stroke-width="1.8" fill="none"/></svg><svg class=a style="left:568px;top:710.8px" width="14" height="14"><path d="M2,2 L11,2 L2,11 L11,11" stroke="#000" stroke-width="3" fill="none"/></svg><div class=a style="left:505px;top:735.4px;width:11px;height:11px;border:1px solid #8e8f8f;background:linear-gradient(135deg,#dcdcdc,#fafafa)"></div><svg class=a style="left:505px;top:735.4px" width="13" height="13"><path d="M3,6.5 L5.5,10 L10,2.5" stroke="#4a5f97" stroke-width="1.8" fill="none"/></svg><svg class=a style="left:523px;top:734.9px" width="14" height="14"><circle cx="6.5" cy="6.5" r="4.5" stroke="#000" stroke-width="3" fill="none"/></svg><div class=a style="left:551px;top:735.4px;width:11px;height:11px;border:1px solid #8e8f8f;background:linear-gradient(135deg,#dcdcdc,#fafafa)"></div><svg class=a style="left:551px;top:735.4px" width="13" height="13"><path d="M3,6.5 L5.5,10 L10,2.5" stroke="#4a5f97" stroke-width="1.8" fill="none"/></svg><svg class=a style="left:568px;top:734.9px" width="14" height="14"><path d="M11,2 L2,2 L2,11 L11,11 M11,5 L11,8" stroke="#000" stroke-width="3" fill="none"/></svg><div class=a style="left:426px;top:769px;width:157px;height:57px;border:1px solid #d5dfe5;border-radius:3px"></div><div class=t style="left:430px;top:763.5px;font-size:11px;line-height:13px;background:#fff;padding:0 2px;color:#000"><span style="display:inline-block;transform:scaleY(1.08);transform-origin:0 10.3px">Определять автокатет</span></div><div class=a style="left:430px;top:787px;width:10px;height:10px;border-radius:50%;border:1px solid #9a9a9a;background:radial-gradient(circle at 50% 70%,#fafafa,#d8d8d8 70%,#c8c8c8)"></div><div class=a style="left:432px;top:789px;width:6px;height:6px;border-radius:50%;border:1px solid #173a5c;background:radial-gradient(circle at 45% 35%,#b8f0ff,#2aa0e0 50%,#1060a8)"></div><div class=t style="left:449.0px;top:787.7px;font-size:11px;color:#000;transform:scaleY(1.08);transform-origin:0 9.31px;">Только если катет =</div><div class=a style="left:559px;top:783px;width:18px;height:18px;border:1px solid #abadb3;border-color:#abadb3 #dbdfe6 #e3e9ef #e2e3ea;background:#fff;border-radius:2px"></div><div class=t style="left:562.0px;top:787.3px;font-size:11.5px;color:#000;transform:scaleY(1.08);transform-origin:0 9.73px;">2.1</div><div class=a style="left:430px;top:808px;width:10px;height:10px;border-radius:50%;border:1px solid #9a9a9a;background:radial-gradient(circle at 50% 70%,#fafafa,#d8d8d8 70%,#c8c8c8)"></div><div class=t style="left:449.0px;top:808.7px;font-size:11px;color:#000;transform:scaleY(1.08);transform-origin:0 9.31px;">Все швы автокатет</div><div class=a style="left:109.0px;top:835.0px;width:484.0px;height:6.0px;background:linear-gradient(#a0f0a0,#10d020 40%,#00c010)"></div><div class=a style="left:109.0px;top:835.0px;width:12.0px;height:6.0px;background:linear-gradient(90deg,#108010,rgba(0,0,0,0))"></div><div class=t style="left:104.0px;top:845.7px;font-size:11px;color:#0000ee;transform:scaleY(1.08);transform-origin:0 9.31px;text-decoration:underline">Разработка АР</div><div class=t style="left:188.0px;top:845.7px;font-size:11px;color:#0000ee;transform:scaleY(1.08);transform-origin:0 9.31px;text-decoration:underline">КМ</div><div class=t style="left:212.0px;top:845.7px;font-size:11px;color:#0000ee;transform:scaleY(1.08);transform-origin:0 9.31px;text-decoration:underline">КЖ</div><div class=t style="left:237.0px;top:845.7px;font-size:11px;color:#0000ee;transform:scaleY(1.08);transform-origin:0 9.31px;text-decoration:underline">КМД</div><div class=t style="left:270.0px;top:845.7px;font-size:11px;color:#0000ee;transform:scaleY(1.08);transform-origin:0 9.31px;text-decoration:underline">ППР</div><div class=t style="left:298.0px;top:845.7px;font-size:11px;color:#0000ee;transform:scaleY(1.08);transform-origin:0 9.31px;text-decoration:underline">Ген. проектирование</div><div class=t style="left:104.0px;top:859.7px;font-size:11px;color:#0000ee;transform:scaleY(1.08);transform-origin:0 9.31px;text-decoration:underline">Изготовление и монтаж металлоконструкций</div><div class=t style="left:104.0px;top:873.7px;font-size:11px;color:#0000ee;transform:scaleY(1.08);transform-origin:0 9.31px;text-decoration:underline">Форум Tekla Structures.</div><div class=t style="left:230.0px;top:873.7px;font-size:11px;color:#0000ee;transform:scaleY(1.08);transform-origin:0 9.31px;text-decoration:underline">Обучение Tekla Structures,</div><div class=t style="left:364.0px;top:873.7px;font-size:11px;color:#0000ee;transform:scaleY(1.08);transform-origin:0 9.31px;text-decoration:underline">Robot Structural Analysis</div><div class=t style="left:105.0px;top:887.7px;font-size:11px;color:#0000ee;transform:scaleY(1.08);transform-origin:0 9.31px;text-decoration:underline">Купить Tekla Structures</div><div class=t style="left:227.0px;top:887.7px;font-size:11px;color:#0000ee;transform:scaleY(1.08);transform-origin:0 9.31px;text-decoration:underline">Среду Topengineer</div><div class=t style="left:330.0px;top:887.7px;font-size:11px;color:#0000ee;transform:scaleY(1.08);transform-origin:0 9.31px;text-decoration:underline">Техтран</div><div class=t style="left:381.0px;top:887.7px;font-size:11px;color:#0000ee;transform:scaleY(1.08);transform-origin:0 9.31px;text-decoration:underline">Xplugins</div><div class=t style="left:400px;top:872.6px;width:194px;text-align:right;font-size:12.3px;font-style:italic;color:#000">8(495) 215-07-79</div><div class=t style="left:400px;top:886.6px;width:194px;text-align:right;font-size:12.3px;font-style:italic;color:#000">Topengineer.ru</div><div class=a style="left:436.0px;top:850.0px;width:154.0px;height:3.0px;border:1px solid #c8c8c8;background:#e8e8e8;box-sizing:border-box;border-radius:1px"></div><div class=a style="left:580px;top:844px;width:10px;height:17px;border:1px solid #888;border-radius:2px 2px 5px 5px;background:linear-gradient(90deg,#f4f4f4,#d8d8d8)"></div><div class=a style="left:442.0px;top:865.0px;width:1.0px;height:4.0px;background:#b0b0b0"></div><div class=a style="left:458.0px;top:865.0px;width:1.0px;height:4.0px;background:#b0b0b0"></div><div class=a style="left:474.0px;top:865.0px;width:1.0px;height:4.0px;background:#b0b0b0"></div><div class=a style="left:490.0px;top:865.0px;width:1.0px;height:4.0px;background:#b0b0b0"></div><div class=a style="left:506.0px;top:865.0px;width:1.0px;height:4.0px;background:#b0b0b0"></div><div class=a style="left:522.0px;top:865.0px;width:1.0px;height:4.0px;background:#b0b0b0"></div><div class=a style="left:538.0px;top:865.0px;width:1.0px;height:4.0px;background:#b0b0b0"></div><div class=a style="left:554.0px;top:865.0px;width:1.0px;height:4.0px;background:#b0b0b0"></div><div class=a style="left:570.0px;top:865.0px;width:1.0px;height:4.0px;background:#b0b0b0"></div><div class=a style="left:586.0px;top:865.0px;width:1.0px;height:4.0px;background:#b0b0b0"></div><div class=a style="left:8px;top:1041px;width:38px;height:38px;border-radius:50%;background:radial-gradient(circle at 50% 85%,#40e0ff 0%,#1a80c8 30%,rgba(20,80,150,0) 60%),radial-gradient(circle at 50% 30%,#9ad0f0,#2a70b0 50%,#0c3a70 85%);box-shadow:0 0 0 1px #1a3050"></div><svg class=a style="left:16px;top:1049px" width="22" height="22"><path d="M2,4 Q6,2 10,4 L9,10 Q5,8 1,10Z" fill="#f25022"/><path d="M11,4 Q15,6 20,4 L19,10 Q15,12 10,10Z" fill="#7fba00"/><path d="M1,11 Q5,9 9,11 L8,17 Q4,15 0,17Z" fill="#00a4ef"/><path d="M10,11 Q14,13 19,11 L18,17 Q14,19 9,17Z" fill="#ffb900"/></svg><svg class=a style="left:72px;top:1045px" width="34" height="32"><path d="M2,6 L12,6 L14,3 L30,3 L30,28 L2,28Z" fill="#f0d880" stroke="#c0a050"/><rect x="5" y="9" width="24" height="6" fill="#fff"/><path d="M8,18 L26,18 L26,30 L22,30 L22,24 L12,24 L12,30 L8,30Z" fill="#60b8e8" stroke="#3080c0"/></svg><div class=a style="left:122px;top:1041px;width:57px;height:37px;border:1px solid #0c1018;border-radius:3px;box-shadow:inset 0 0 0 1px rgba(255,255,255,.25);background:linear-gradient(#6a7684,#3a4654 40%,#26303c)"></div><div class=a style="left:184px;top:1041px;width:57px;height:37px;border:1px solid #0c1018;border-radius:3px;box-shadow:inset 0 0 0 1px rgba(255,255,255,.25);background:linear-gradient(#6a7684,#3a4654 40%,#26303c)"></div><div class=a style="left:246px;top:1041px;width:57px;height:37px;border:1px solid #0c1018;border-radius:3px;box-shadow:inset 0 0 0 1px rgba(255,255,255,.25);background:linear-gradient(#8a9aaa,#4a5868 40%,#2a3644)"></div><svg class=a style="left:136px;top:1046px" width="28" height="28"><path d="M14,14 L2.74,7.5 A13,13 0 0 1 25.26,7.5 Z" fill="#db4437"/><path d="M14,14 L25.26,7.5 A13,13 0 0 1 14,27 Z" fill="#f4c20d"/><path d="M14,14 L14,27 A13,13 0 0 1 2.74,7.5 Z" fill="#0f9d58"/><circle cx="14" cy="14" r="6.2" fill="#fff"/><circle cx="14" cy="14" r="4.8" fill="#4a88e8"/></svg><svg class=a style="left:197px;top:1047px" width="32" height="26"><path d="M30,4 C16,0 4,5 3,14 C3,22 14,25 24,22 L28,16 L17,16 C14,14 14,11 17,9 L30,9Z" fill="#e8441c"/><path d="M6,8 Q2,14 6,20" stroke="#fff" stroke-width="1" fill="none"/></svg><svg class=a style="left:258px;top:1045px" width="34" height="32"><path d="M4,8 L28,2 L30,22 L6,26Z" fill="#c8283a"/><path d="M10,12 L16,9 L22,12 L16,15Z M14,16 L19,14 L23,17 L18,19Z" fill="#fff"/><path d="M2,24 L20,22 L20,30 L4,30Z" fill="#1a40a0"/><text x="20" y="31" font-size="9" fill="#fff" font-family="Liberation Sans">20</text></svg><div class=t style="left:1658.0px;top:1051.3px;font-size:11.5px;color:#fff;transform:scaleY(1.08);transform-origin:0 9.73px;">RU</div><svg class=a style="left:1688px;top:1055px" width="10" height="6"><path d="M0,5 L5,0 L10,5Z" fill="#fff"/></svg><svg class=a style="left:1708px;top:1051px" width="20" height="18"><rect x="1" y="1" width="18" height="16" fill="#e8441c" rx="2"/><path d="M15,4 C8,3 4,6 4,9 C4,13 10,14 14,12 L15,10 L10,10 C8,9 8,8 10,7 L15,7Z" fill="#fff"/></svg><div class=a style="left:1733px;top:1051px;width:18px;height:17px;background:#a8a8a8;color:#fff;font-size:11px;line-height:17px;text-align:center">Ru</div><svg class=a style="left:1758px;top:1052px" width="18" height="16"><path d="M4,2 L8,5 L4,8 L0,5Z M13,2 L17,5 L13,8 L9,5Z M4,8 L8,11 L4,14 L0,11Z" fill="#fff"/><circle cx="13" cy="12" r="4" fill="#30c040"/></svg><svg class=a style="left:1781px;top:1051px" width="20" height="18"><rect x="5" y="2" width="13" height="10" fill="none" stroke="#fff" stroke-width="1.5"/><path d="M2,6 L2,16 M2,16 L10,16" stroke="#fff" stroke-width="1.5"/></svg><svg class=a style="left:1805px;top:1052px" width="18" height="16"><path d="M1,5 L5,5 L9,1 L9,15 L5,11 L1,11Z" fill="#fff"/><path d="M11,4 Q14,8 11,12 M13,2 Q17,8 13,14" stroke="#fff" fill="none"/></svg><div class=t style="left:1853.0px;top:1047.3px;font-size:11.5px;color:#fff;transform:scaleY(1.08);transform-origin:0 9.73px;">12:39</div><div class=t style="left:1840.0px;top:1064.7px;font-size:11px;color:#fff;transform:scaleY(1.08);transform-origin:0 9.31px;">03.03.2015</div><div class=a style="left:1906.0px;top:1042.0px;width:13.0px;height:37.0px;background:linear-gradient(90deg,#2a3440,#1e2630);border:1px solid #5a6878"></div></body></html>
